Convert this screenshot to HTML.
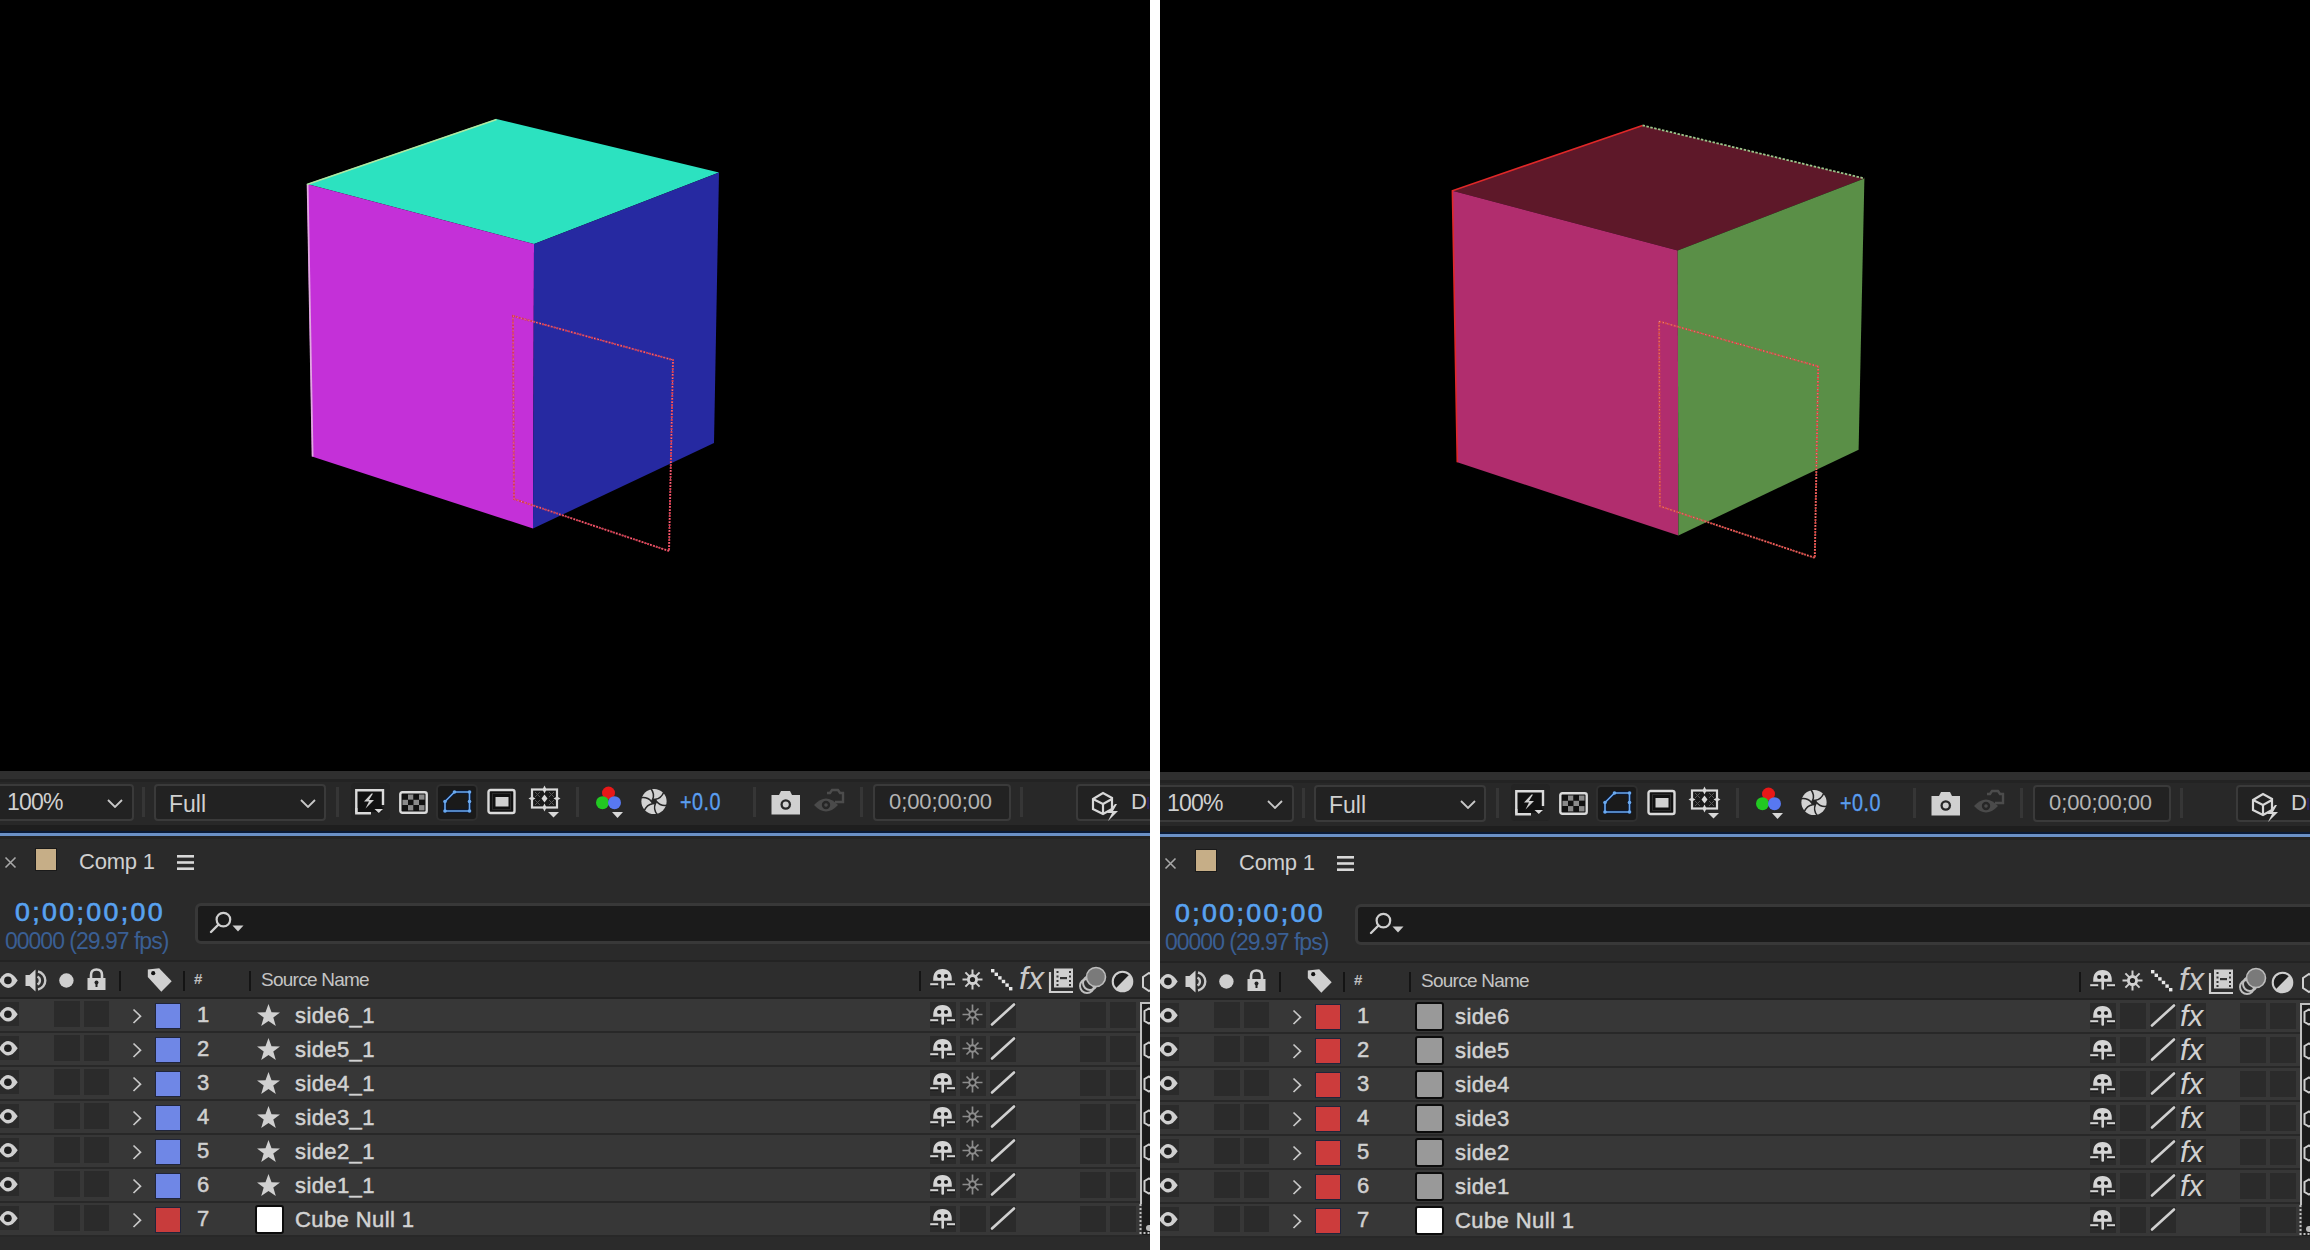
<!DOCTYPE html>
<html><head><meta charset="utf-8"><style>
html,body{margin:0;padding:0;}
body{width:2310px;height:1250px;position:relative;overflow:hidden;background:#fff;font-family:"Liberation Sans", sans-serif;}
.panel{position:absolute;top:0;width:1150px;height:1250px;overflow:hidden;}
</style></head><body>
<div class="panel" style="left:0;top:0">
<div style="position:absolute;left:0px;top:-2px;width:1150px;height:773px;background:#000;"></div>
<svg style="position:absolute;left:0px;top:0px;" width="1150" height="771" viewBox="0 0 1150 771"><polygon points="496.5,119 719,172.5 534,244 307,184" fill="#2ce2c0"/><polygon points="307,184 534,244 533,528.5 312,456.5" fill="#c430d8"/><polygon points="534,244 719,172.5 714,443 533,528.5" fill="#2629a1"/><polygon points="513,316 673,360 669,551 514,499" fill="none" stroke="#d83c50" stroke-width="2" stroke-dasharray="2 1"/><polygon points="513,316 673,360 669,551 514,499" fill="none" stroke="#f0b8c8" stroke-width="1" stroke-dasharray="1 3" opacity="0.6"/><line x1="307.6" y1="184" x2="312.6" y2="456.5" stroke="#e0a8e0" stroke-width="1.8"/><line x1="307" y1="184.5" x2="496.5" y2="119.5" stroke="#b0e8a0" stroke-width="1.6"/></svg>
<div style="position:absolute;left:0px;top:771px;width:1150px;height:8px;background:#2f2f2f;"></div>
<div style="position:absolute;left:0px;top:779px;width:1150px;height:3px;background:#232323;"></div>
<div style="position:absolute;left:0px;top:782px;width:1150px;height:43px;background:#282828;"></div>
<div style="position:absolute;left:0px;top:825px;width:1150px;height:6px;background:#1e1e1e;"></div>
<div style="position:absolute;left:0px;top:831px;width:1150px;height:2px;background:#0a1a35;"></div>
<div style="position:absolute;left:0px;top:833px;width:1150px;height:3px;background:#6a90c6;"></div>
<div style="position:absolute;left:0px;top:836px;width:1150px;height:3px;background:#232323;"></div>
<div style="position:absolute;left:0px;top:839px;width:1150px;height:411px;background:#2a2a2a;"></div>
<div style="position:absolute;left:-10px;top:784px;width:144px;height:37px;background:#222;border:2px solid #3a3a3a;border-radius:4px;box-sizing:border-box;"></div>
<div style="position:absolute;left:7px;top:791px;font-size:23px;line-height:23px;color:#d0d0d0;font-weight:normal;white-space:nowrap;letter-spacing:-0.8px;">100%</div>
<svg style="position:absolute;left:107px;top:799px;" width="16" height="9" viewBox="0 0 16 9"><polyline points="1,1 8,8 15,1" fill="none" stroke="#c8c8c8" stroke-width="1.8"/></svg>
<div style="position:absolute;left:142px;top:787px;width:3px;height:30px;background:#363636;"></div>
<div style="position:absolute;left:154px;top:784px;width:172px;height:37px;background:#222;border:2px solid #3a3a3a;border-radius:4px;box-sizing:border-box;"></div>
<div style="position:absolute;left:169px;top:793px;font-size:23px;line-height:23px;color:#d0d0d0;font-weight:normal;white-space:nowrap;">Full</div>
<svg style="position:absolute;left:300px;top:799px;" width="16" height="9" viewBox="0 0 16 9"><polyline points="1,1 8,8 15,1" fill="none" stroke="#c8c8c8" stroke-width="1.8"/></svg>
<div style="position:absolute;left:336px;top:787px;width:3px;height:30px;background:#363636;"></div>
<div style="position:absolute;left:351px;top:783px;width:39px;height:37px;background:#242424;border-radius:4px;"></div>
<svg style="position:absolute;left:354px;top:788px;" width="32" height="28" viewBox="0 0 32 28"><rect x="3" y="3" width="25" height="21" fill="#111"/><path d="M2.3,24.5 V2.3 H29 V17" fill="none" stroke="#dadada" stroke-width="2.4"/><path d="M2.3,20 V25.2 H17" fill="none" stroke="#dadada" stroke-width="2.4"/><path d="M17.5,5.5 L10,13.5 H15 L11.5,20.5 L20,12 H15 L19,5.5 Z" fill="#d0d0d0"/><path d="M19,19.5 H30 L24.5,25.5 Z" fill="#111"/><path d="M20.5,21 H29 L24.75,25 Z" fill="#dadada"/></svg>
<svg style="position:absolute;left:399px;top:791px;" width="29" height="23" viewBox="0 0 29 23"><rect x="2" y="2" width="25" height="19" fill="#111"/><rect x="3.5" y="3.5" width="5.5" height="5.3" fill="#111"/><rect x="3.5" y="8.8" width="5.5" height="5.3" fill="#8a8a8a"/><rect x="3.5" y="14.1" width="5.5" height="5.3" fill="#111"/><rect x="9.0" y="3.5" width="5.5" height="5.3" fill="#8a8a8a"/><rect x="9.0" y="8.8" width="5.5" height="5.3" fill="#111"/><rect x="9.0" y="14.1" width="5.5" height="5.3" fill="#8a8a8a"/><rect x="14.5" y="3.5" width="5.5" height="5.3" fill="#111"/><rect x="14.5" y="8.8" width="5.5" height="5.3" fill="#8a8a8a"/><rect x="14.5" y="14.1" width="5.5" height="5.3" fill="#111"/><rect x="20.0" y="3.5" width="5.5" height="5.3" fill="#8a8a8a"/><rect x="20.0" y="8.8" width="5.5" height="5.3" fill="#111"/><rect x="20.0" y="14.1" width="5.5" height="5.3" fill="#8a8a8a"/><rect x="1.3" y="1.3" width="26.4" height="20.4" rx="2" fill="none" stroke="#dadada" stroke-width="2.4"/></svg>
<div style="position:absolute;left:436px;top:784px;width:42px;height:37px;background:#1a1a1a;border-radius:5px;border:2px solid #2f2f2f;box-sizing:border-box;"></div>
<svg style="position:absolute;left:441px;top:787px;" width="33" height="30" viewBox="0 0 33 30"><path d="M4,14.5 L13.5,5 H28.5 V24 H4 Z" fill="none" stroke="#0a1a3a" stroke-width="3.5"/><path d="M4,14.5 L13.5,5 H28.5 V24 H4 Z" fill="none" stroke="#6aa8f0" stroke-width="1.6"/><g fill="#6aaaf0"><circle cx="4" cy="14.5" r="1.8"/><circle cx="13.5" cy="5" r="1.8"/><circle cx="28.5" cy="5" r="1.8"/><circle cx="28.5" cy="14.5" r="1.8"/><circle cx="28.5" cy="24" r="1.8"/><circle cx="4" cy="24" r="1.8"/></g></svg>
<svg style="position:absolute;left:486px;top:788px;" width="31" height="27" viewBox="0 0 31 27"><rect x="2.5" y="2" width="26" height="23" rx="2" fill="#111" stroke="#dadada" stroke-width="2.4"/><rect x="6.5" y="5.5" width="18" height="16" fill="none" stroke="#2a2a2a" stroke-width="1"/><rect x="9.5" y="9" width="13" height="9.5" fill="#d0d0d0"/></svg>
<svg style="position:absolute;left:527px;top:785px;" width="34" height="34" viewBox="0 0 34 34"><rect x="5" y="4.5" width="25" height="18" fill="#1a1a1a" stroke="#dadada" stroke-width="2.2"/><g fill="#d8d8d8"><path d="M17.5,0.5 L19.5,4.5 L17.5,8.5 L15.5,4.5 Z"/><path d="M17.5,18.5 L19.5,22.5 L17.5,26.5 L15.5,22.5 Z"/><path d="M1.5,13.5 L5,11.5 L8.5,13.5 L5,15.5 Z"/><path d="M26.5,13.5 L30,11.5 L33.5,13.5 L30,15.5 Z"/><path d="M17.5,9.5 L20.5,13.5 L17.5,17.5 L14.5,13.5 Z"/></g><g stroke="#555" stroke-width="1"><path d="M8,7 L13,12 M13,7 L8,12 M22,7 L27,12 M27,7 L22,12 M8,15 L13,20 M13,15 L8,20 M22,15 L27,20 M27,15 L22,20"/></g><path d="M21,27 H32 L26.5,32.5 Z" fill="#d8d8d8"/></svg>
<div style="position:absolute;left:576px;top:787px;width:3px;height:30px;background:#363636;"></div>
<svg style="position:absolute;left:594px;top:785px;" width="32" height="34" viewBox="0 0 32 34"><circle cx="14.5" cy="8" r="6.5" fill="#e81818"/><circle cx="8.5" cy="17.7" r="6.5" fill="#22c822"/><circle cx="20.5" cy="17.7" r="6.5" fill="#5878f0"/><path d="M18,27 H29 L23.5,33 Z" fill="#d8d8d8"/></svg>
<svg style="position:absolute;left:640px;top:787px;" width="28" height="29" viewBox="0 0 28 29"><circle cx="14" cy="14.5" r="12.6" fill="#d2d2d2"/><path d="M14,14.5 m2.6,0.0 q3.7296598096239864,4.699961457764901 10.333099841321168,3.7718758820099647" fill="none" stroke="#262626" stroke-width="1.5"/><path d="M14,14.5 m1.2999944861086188,2.2516692332772124 q-2.2054697786407074,5.579955470745489 1.8999830549481462,10.83466955614752" fill="none" stroke="#262626" stroke-width="1.5"/><path d="M14,14.5 m-1.3000110277593755,2.25165968292369 q-5.935120233864074,0.8799703458510681 -8.433124845065478,7.062747719375183" fill="none" stroke="#262626" stroke-width="1.5"/><path d="M14,14.5 m-2.5999999999298393,-1.9100666536118694e-05 q-3.729625281678519,-4.6999888572489645 -10.333072131294855,-3.771951793098318" fill="none" stroke="#262626" stroke-width="1.5"/><path d="M14,14.5 m-1.2999779443877018,-2.2516787835092122 q2.205510771223016,-5.5799392683092215 -1.8999034589698673,-10.834683513910054" fill="none" stroke="#262626" stroke-width="1.5"/><path d="M14,14.5 m1.3000275693399714,-2.251650132448646 q5.935126698327047,-0.8799267439994558 8.433176730679842,-7.062685765990164" fill="none" stroke="#262626" stroke-width="1.5"/><circle cx="14" cy="14.5" r="3" fill="#262626"/></svg>
<div style="position:absolute;left:680px;top:791px;font-size:23px;line-height:23px;color:#5a9ef0;font-weight:normal;white-space:nowrap;letter-spacing:0.6px;-webkit-text-stroke:0.3px #5a9ef0;transform:scaleX(0.86);transform-origin:0 0;">+0.0</div>
<div style="position:absolute;left:753px;top:787px;width:3px;height:30px;background:#363636;"></div>
<svg style="position:absolute;left:770px;top:789px;" width="32" height="28" viewBox="0 0 32 28"><path d="M1.5,6 H9 L11,2 H20 L22,6 H30 V25.5 H1.5 Z" fill="#d0d0d0"/><circle cx="15.75" cy="15.5" r="5.3" fill="#282828"/><circle cx="15.75" cy="15.5" r="3" fill="#d0d0d0"/></svg>
<svg style="position:absolute;left:812px;top:786px;" width="34" height="29" viewBox="0 0 34 29"><g fill="none" stroke="#4c4c4c" stroke-width="2.4"><path d="M15,7 H18 L20,4 H26 L28,7 H31 V16 H23"/></g><path d="M2,19 Q14,6 26,19 Q14,32 2,19 Z" fill="#4a4a4a"/><circle cx="14" cy="19" r="4.2" fill="#262626"/><circle cx="14" cy="19" r="1.8" fill="#4a4a4a"/></svg>
<div style="position:absolute;left:860px;top:787px;width:3px;height:30px;background:#363636;"></div>
<div style="position:absolute;left:873px;top:784px;width:138px;height:37px;background:#222;border:2px solid #3a3a3a;border-radius:4px;box-sizing:border-box;"></div>
<div style="position:absolute;left:889px;top:791px;font-size:22px;line-height:22px;color:#b4b4b4;font-weight:normal;white-space:nowrap;letter-spacing:-0.1px;">0;00;00;00</div>
<div style="position:absolute;left:1020px;top:787px;width:3px;height:30px;background:#363636;"></div>
<div style="position:absolute;left:1076px;top:784px;width:120px;height:37px;background:#222;border:2px solid #3a3a3a;border-radius:4px;box-sizing:border-box;"></div>
<svg style="position:absolute;left:1089px;top:790px;" width="33" height="32" viewBox="0 0 33 32"><g fill="none" stroke="#d8d8d8" stroke-width="2.2"><path d="M4,9 L14,3 L23,8 V19 L14,24 L4,19 Z"/><path d="M4,9 L14,14 L23,9"/><path d="M14,14 V24"/></g><path d="M26,14 L18,23 H23 L19,31 L29,21 H24 L28,14 Z" fill="#d8d8d8"/></svg>
<div style="position:absolute;left:1131px;top:791px;font-size:22px;line-height:22px;color:#d0d0d0;font-weight:normal;white-space:nowrap;">D</div>
<div style="position:absolute;left:1147px;top:797px;width:2px;height:12px;background:#2a2462;"></div>
<svg style="position:absolute;left:4px;top:856px;" width="13" height="13" viewBox="0 0 13 13"><path d="M1.5,1.5 L11.5,11.5 M11.5,1.5 L1.5,11.5" stroke="#a8a8a8" stroke-width="1.6"/></svg>
<div style="position:absolute;left:35.5px;top:849px;width:20px;height:21px;background:#c6ae87;box-shadow:0 0 0 1px #1a1a1a;"></div>
<div style="position:absolute;left:79px;top:851px;font-size:22px;line-height:22px;color:#cfcfcf;font-weight:normal;white-space:nowrap;letter-spacing:-0.2px;">Comp 1</div>
<svg style="position:absolute;left:176px;top:854px;" width="19" height="17" viewBox="0 0 19 17"><g fill="#d8d8d8"><rect x="1" y="1" width="17" height="2.6"/><rect x="1" y="7.2" width="17" height="2.6"/><rect x="1" y="13.4" width="17" height="2.6"/></g></svg>
<div style="position:absolute;left:15px;top:900px;font-size:25px;line-height:25px;color:#58a2f0;font-weight:normal;white-space:nowrap;-webkit-text-stroke:0.6px #58a2f0;letter-spacing:2.2px;transform:scaleX(1.07);transform-origin:0 0;">0;00;00;00</div>
<div style="position:absolute;left:5px;top:930px;font-size:23px;line-height:23px;color:#3a5f94;font-weight:normal;white-space:nowrap;letter-spacing:-1.0px;">00000 (29.97 fps)</div>
<div style="position:absolute;left:195px;top:903px;width:980px;height:41px;background:#1b1b1b;border:3px solid #383838;border-radius:6px;box-sizing:border-box;"></div>
<svg style="position:absolute;left:206px;top:909px;" width="42" height="30" viewBox="0 0 42 30"><circle cx="17.4" cy="10.6" r="6.8" fill="none" stroke="#cfcfcf" stroke-width="2.2"/><path d="M12.5,15.5 L5,23" stroke="#cfcfcf" stroke-width="2.4" stroke-linecap="round"/><path d="M26.5,16.5 H37.5 L32,22.5 Z" fill="#cfcfcf"/></svg>
<div style="position:absolute;left:0px;top:960px;width:1150px;height:2px;background:#232323;"></div>
<div style="position:absolute;left:0px;top:962px;width:1150px;height:35px;background:#2d2d2d;"></div>
<div style="position:absolute;left:0px;top:997px;width:1150px;height:2px;background:#222;"></div>
<svg style="position:absolute;left:-1px;top:971px;" width="20" height="20" viewBox="0 0 20 20"><path d="M0,9.5 Q9,-5.5 18.7,9.5 Q9,24.5 0,9.5 Z" fill="#d0d0d0"/><circle cx="8.9" cy="9.4" r="3.8" fill="#1e1e1e"/></svg>
<svg style="position:absolute;left:24px;top:968px;" width="27" height="25" viewBox="0 0 27 25"><path d="M1.5,7 H5.5 L11.5,1.5 V23.5 L5.5,18 H1.5 Z" fill="#d0d0d0"/><g fill="none" stroke="#c8c8c8" stroke-width="2.4"><path d="M13.5,8.5 A4.5,4.5 0 0 1 13.5,16.5"/><path d="M14,3.5 A9.2,9.2 0 0 1 14,21.5"/></g></svg>
<svg style="position:absolute;left:58px;top:972px;" width="17" height="17" viewBox="0 0 17 17"><circle cx="8.4" cy="8.5" r="7.2" fill="#cfcfcf"/></svg>
<svg style="position:absolute;left:86px;top:968px;" width="21" height="23" viewBox="0 0 21 23"><path d="M5,10 V7 Q5,1.5 10.5,1.5 Q16,1.5 16,7 V10" fill="none" stroke="#d0d0d0" stroke-width="2.6"/><rect x="1.5" y="10" width="18" height="12" fill="#d0d0d0"/><circle cx="10.5" cy="14.5" r="2" fill="#222"/><rect x="9.5" y="15" width="2" height="4" fill="#222"/></svg>
<div style="position:absolute;left:119px;top:971px;width:2px;height:20px;background:#141414;"></div>
<svg style="position:absolute;left:146px;top:967px;" width="27" height="26" viewBox="0 0 27 26"><path d="M1.8,2.4 L13.2,1.3 L25.7,14.3 L15.3,24.7 L1.8,10.1 Z" fill="#d0d0d0"/><circle cx="7.2" cy="6.2" r="2.1" fill="#111"/></svg>
<div style="position:absolute;left:183px;top:971px;width:2px;height:20px;background:#141414;"></div>
<div style="position:absolute;left:194px;top:971px;font-size:15px;line-height:15px;color:#bfbfbf;font-weight:bold;white-space:nowrap;">#</div>
<div style="position:absolute;left:249px;top:971px;width:2px;height:20px;background:#141414;"></div>
<div style="position:absolute;left:261px;top:970px;font-size:19px;line-height:19px;color:#c4c4c4;font-weight:normal;white-space:nowrap;letter-spacing:-0.75px;">Source Name</div>
<div style="position:absolute;left:919px;top:971px;width:2px;height:20px;background:#141414;"></div>
<svg style="position:absolute;left:928px;top:967px;" width="30" height="25" viewBox="0 0 30 25"><path d="M5.2,13.8 Q4.8,2 14.5,2 Q24.2,2 23.8,13.8 Z" fill="#d4d4d4"/><circle cx="11.2" cy="9" r="2.1" fill="#1a1a1a"/><circle cx="18" cy="9" r="2.1" fill="#1a1a1a"/><rect x="13.4" y="12" width="2.6" height="9.8" rx="1" fill="#d4d4d4"/><rect x="2.2" y="16.2" width="8" height="2.3" fill="#d4d4d4"/><rect x="19" y="16.2" width="8" height="2.3" fill="#d4d4d4"/><rect x="2.2" y="18.5" width="8" height="1" fill="#111"/><rect x="19" y="18.5" width="8" height="1" fill="#111"/></svg>
<svg style="position:absolute;left:961px;top:968px;" width="23" height="23" viewBox="0 0 23 23"><g stroke="#d0d0d0" stroke-width="2"><path d="M11.5,1.5 V21.5 M1.5,11.5 H21.5 M4.4,4.4 L18.6,18.6 M18.6,4.4 L4.4,18.6"/></g><circle cx="11.5" cy="11.5" r="5.5" fill="#d0d0d0"/><circle cx="11.5" cy="11.5" r="2.6" fill="#222"/></svg>
<svg style="position:absolute;left:990px;top:968px;" width="24" height="24" viewBox="0 0 24 24"><g fill="#e8e8e8"><rect x="1.0" y="1.0" width="3.4" height="3.4"/><rect x="4.6" y="4.6" width="3.4" height="3.4"/><rect x="8.2" y="8.2" width="3.4" height="3.4"/><rect x="11.8" y="11.8" width="3.4" height="3.4"/><rect x="15.4" y="15.4" width="3.4" height="3.4"/><rect x="19.0" y="19.0" width="3.4" height="3.4"/></g></svg>
<div style="position:absolute;left:1019px;top:962px;font-size:32px;line-height:32px;color:#c8c8c8;font-weight:normal;white-space:nowrap;font-style:italic;font-family:"Liberation Serif",serif;letter-spacing:-1px;">fx</div>
<svg style="position:absolute;left:1048px;top:967px;" width="27" height="27" viewBox="0 0 27 27"><path d="M2,5 V25 H25" fill="none" stroke="#cfcfcf" stroke-width="2.2"/><rect x="6" y="1.5" width="19" height="19" fill="#cfcfcf"/><g fill="#333"><rect x="8.5" y="4" width="2" height="2"/><rect x="8.5" y="8.5" width="2" height="2"/><rect x="8.5" y="13" width="2" height="2"/><rect x="8.5" y="17" width="2" height="2"/><rect x="21" y="4" width="2" height="2"/><rect x="21" y="8.5" width="2" height="2"/><rect x="21" y="13" width="2" height="2"/><rect x="21" y="17" width="2" height="2"/><rect x="12" y="10" width="7" height="2.2"/></g></svg>
<svg style="position:absolute;left:1078px;top:966px;" width="30" height="29" viewBox="0 0 30 29"><g fill="none" stroke="#c0c0c0" stroke-width="2"><circle cx="9" cy="20" r="7"/><circle cx="12" cy="17" r="7"/></g><circle cx="18" cy="11" r="9.5" fill="#7a7a7a" stroke="#bdbdbd" stroke-width="1.6"/></svg>
<svg style="position:absolute;left:1111px;top:970px;" width="23" height="23" viewBox="0 0 23 23"><circle cx="11.5" cy="11.5" r="9.8" fill="#cfcfcf"/><path d="M18.4,4.6 A9.8,9.8 0 0 0 4.6,18.4 Z" fill="#1e1e1e"/><circle cx="11.5" cy="11.5" r="9.8" fill="none" stroke="#cfcfcf" stroke-width="2"/></svg>
<svg style="position:absolute;left:1141px;top:970px;" width="12" height="24" viewBox="0 0 12 24"><path d="M2,7 L8,3 L14,7 V17 L8,21 L2,17 Z" fill="none" stroke="#cfcfcf" stroke-width="2"/></svg>
<div style="position:absolute;left:0px;top:999px;width:1150px;height:32px;background:#373737;"></div>
<div style="position:absolute;left:0px;top:1031px;width:1150px;height:2px;background:#282828;"></div>
<div style="position:absolute;left:0px;top:1002px;width:19px;height:24px;background:#2b2b2b;"></div>
<svg style="position:absolute;left:-1px;top:1005px;" width="20" height="19" viewBox="0 0 20 19"><path d="M0,9.3 Q9,-5.3 18.7,9.3 Q9,23.9 0,9.3 Z" fill="#d0d0d0"/><circle cx="8.9" cy="9.2" r="3.8" fill="#1e1e1e"/></svg>
<div style="position:absolute;left:53.5px;top:1001px;width:26.5px;height:26px;background:#2b2b2b;"></div>
<div style="position:absolute;left:83.7px;top:1001px;width:25.5px;height:26px;background:#2b2b2b;"></div>
<svg style="position:absolute;left:131px;top:1008px;" width="12" height="17" viewBox="0 0 12 17"><polyline points="2.5,1.5 9.5,8.2 2.5,15" fill="none" stroke="#c8c8c8" stroke-width="1.7"/></svg>
<div style="position:absolute;left:154.5px;top:1002.8px;width:26px;height:26px;background:#6f87e6;border:1px solid #20253a;box-sizing:border-box;"></div>
<div style="position:absolute;left:197px;top:1004px;font-size:22px;line-height:22px;color:#d0d0d0;font-weight:normal;white-space:nowrap;-webkit-text-stroke:0.5px #d0d0d0;">1</div>
<svg style="position:absolute;left:256px;top:1003px;" width="25" height="24" viewBox="0 0 25 24"><path d="M12.5,1 L15.5,9.2 L24,9.4 L17.3,14.6 L19.8,23 L12.5,18 L5.2,23 L7.7,14.6 L1,9.4 L9.5,9.2 Z" fill="#d0d0d0"/></svg>
<div style="position:absolute;left:295px;top:1005px;font-size:22px;line-height:22px;color:#d2d2d2;font-weight:normal;white-space:nowrap;letter-spacing:0.4px;-webkit-text-stroke:0.5px #d2d2d2;">side6_1</div>
<div style="position:absolute;left:929.5px;top:1002px;width:26.5px;height:25.5px;background:#2b2b2b;"></div>
<svg style="position:absolute;left:928px;top:1003px;" width="30" height="25" viewBox="0 0 30 25"><path d="M5.2,13.8 Q4.8,2 14.5,2 Q24.2,2 23.8,13.8 Z" fill="#d4d4d4"/><circle cx="11.2" cy="9" r="2.1" fill="#1a1a1a"/><circle cx="18" cy="9" r="2.1" fill="#1a1a1a"/><rect x="13.4" y="12" width="2.6" height="9.8" rx="1" fill="#d4d4d4"/><rect x="2.2" y="16.2" width="8" height="2.3" fill="#d4d4d4"/><rect x="19" y="16.2" width="8" height="2.3" fill="#d4d4d4"/><rect x="2.2" y="18.5" width="8" height="1" fill="#111"/><rect x="19" y="18.5" width="8" height="1" fill="#111"/></svg>
<div style="position:absolute;left:960px;top:1002px;width:26px;height:25.5px;background:#2b2b2b;"></div>
<svg style="position:absolute;left:961px;top:1003px;" width="23" height="23" viewBox="0 0 23 23"><g stroke="#8c8c8c" stroke-width="1.7"><path d="M11.5,1.5 V21.5 M1.5,11.5 H21.5 M5.5,5.5 L17.5,17.5 M17.5,5.5 L5.5,17.5"/></g><circle cx="11.5" cy="11.5" r="4.2" fill="#8c8c8c"/><circle cx="11.5" cy="11.5" r="2.3" fill="#222"/></svg>
<div style="position:absolute;left:990px;top:1002px;width:26px;height:25.5px;background:#2b2b2b;"></div>
<svg style="position:absolute;left:989px;top:1002px;" width="28" height="25" viewBox="0 0 28 25"><path d="M3,22.5 L25,2.5" stroke="#d0d0d0" stroke-width="2.6" stroke-linecap="round"/></svg>
<div style="position:absolute;left:1079.5px;top:1002px;width:26px;height:25.5px;background:#2b2b2b;"></div>
<div style="position:absolute;left:1110px;top:1002px;width:26px;height:25.5px;background:#2b2b2b;"></div>
<div style="position:absolute;left:0px;top:1033px;width:1150px;height:32px;background:#373737;"></div>
<div style="position:absolute;left:0px;top:1065px;width:1150px;height:2px;background:#282828;"></div>
<div style="position:absolute;left:0px;top:1036px;width:19px;height:24px;background:#2b2b2b;"></div>
<svg style="position:absolute;left:-1px;top:1039px;" width="20" height="19" viewBox="0 0 20 19"><path d="M0,9.3 Q9,-5.3 18.7,9.3 Q9,23.9 0,9.3 Z" fill="#d0d0d0"/><circle cx="8.9" cy="9.2" r="3.8" fill="#1e1e1e"/></svg>
<div style="position:absolute;left:53.5px;top:1035px;width:26.5px;height:26px;background:#2b2b2b;"></div>
<div style="position:absolute;left:83.7px;top:1035px;width:25.5px;height:26px;background:#2b2b2b;"></div>
<svg style="position:absolute;left:131px;top:1042px;" width="12" height="17" viewBox="0 0 12 17"><polyline points="2.5,1.5 9.5,8.2 2.5,15" fill="none" stroke="#c8c8c8" stroke-width="1.7"/></svg>
<div style="position:absolute;left:154.5px;top:1036.8px;width:26px;height:26px;background:#6f87e6;border:1px solid #20253a;box-sizing:border-box;"></div>
<div style="position:absolute;left:197px;top:1038px;font-size:22px;line-height:22px;color:#d0d0d0;font-weight:normal;white-space:nowrap;-webkit-text-stroke:0.5px #d0d0d0;">2</div>
<svg style="position:absolute;left:256px;top:1037px;" width="25" height="24" viewBox="0 0 25 24"><path d="M12.5,1 L15.5,9.2 L24,9.4 L17.3,14.6 L19.8,23 L12.5,18 L5.2,23 L7.7,14.6 L1,9.4 L9.5,9.2 Z" fill="#d0d0d0"/></svg>
<div style="position:absolute;left:295px;top:1039px;font-size:22px;line-height:22px;color:#d2d2d2;font-weight:normal;white-space:nowrap;letter-spacing:0.4px;-webkit-text-stroke:0.5px #d2d2d2;">side5_1</div>
<div style="position:absolute;left:929.5px;top:1036px;width:26.5px;height:25.5px;background:#2b2b2b;"></div>
<svg style="position:absolute;left:928px;top:1037px;" width="30" height="25" viewBox="0 0 30 25"><path d="M5.2,13.8 Q4.8,2 14.5,2 Q24.2,2 23.8,13.8 Z" fill="#d4d4d4"/><circle cx="11.2" cy="9" r="2.1" fill="#1a1a1a"/><circle cx="18" cy="9" r="2.1" fill="#1a1a1a"/><rect x="13.4" y="12" width="2.6" height="9.8" rx="1" fill="#d4d4d4"/><rect x="2.2" y="16.2" width="8" height="2.3" fill="#d4d4d4"/><rect x="19" y="16.2" width="8" height="2.3" fill="#d4d4d4"/><rect x="2.2" y="18.5" width="8" height="1" fill="#111"/><rect x="19" y="18.5" width="8" height="1" fill="#111"/></svg>
<div style="position:absolute;left:960px;top:1036px;width:26px;height:25.5px;background:#2b2b2b;"></div>
<svg style="position:absolute;left:961px;top:1037px;" width="23" height="23" viewBox="0 0 23 23"><g stroke="#8c8c8c" stroke-width="1.7"><path d="M11.5,1.5 V21.5 M1.5,11.5 H21.5 M5.5,5.5 L17.5,17.5 M17.5,5.5 L5.5,17.5"/></g><circle cx="11.5" cy="11.5" r="4.2" fill="#8c8c8c"/><circle cx="11.5" cy="11.5" r="2.3" fill="#222"/></svg>
<div style="position:absolute;left:990px;top:1036px;width:26px;height:25.5px;background:#2b2b2b;"></div>
<svg style="position:absolute;left:989px;top:1036px;" width="28" height="25" viewBox="0 0 28 25"><path d="M3,22.5 L25,2.5" stroke="#d0d0d0" stroke-width="2.6" stroke-linecap="round"/></svg>
<div style="position:absolute;left:1079.5px;top:1036px;width:26px;height:25.5px;background:#2b2b2b;"></div>
<div style="position:absolute;left:1110px;top:1036px;width:26px;height:25.5px;background:#2b2b2b;"></div>
<div style="position:absolute;left:0px;top:1067px;width:1150px;height:32px;background:#373737;"></div>
<div style="position:absolute;left:0px;top:1099px;width:1150px;height:2px;background:#282828;"></div>
<div style="position:absolute;left:0px;top:1070px;width:19px;height:24px;background:#2b2b2b;"></div>
<svg style="position:absolute;left:-1px;top:1073px;" width="20" height="19" viewBox="0 0 20 19"><path d="M0,9.3 Q9,-5.3 18.7,9.3 Q9,23.9 0,9.3 Z" fill="#d0d0d0"/><circle cx="8.9" cy="9.2" r="3.8" fill="#1e1e1e"/></svg>
<div style="position:absolute;left:53.5px;top:1069px;width:26.5px;height:26px;background:#2b2b2b;"></div>
<div style="position:absolute;left:83.7px;top:1069px;width:25.5px;height:26px;background:#2b2b2b;"></div>
<svg style="position:absolute;left:131px;top:1076px;" width="12" height="17" viewBox="0 0 12 17"><polyline points="2.5,1.5 9.5,8.2 2.5,15" fill="none" stroke="#c8c8c8" stroke-width="1.7"/></svg>
<div style="position:absolute;left:154.5px;top:1070.8px;width:26px;height:26px;background:#6f87e6;border:1px solid #20253a;box-sizing:border-box;"></div>
<div style="position:absolute;left:197px;top:1072px;font-size:22px;line-height:22px;color:#d0d0d0;font-weight:normal;white-space:nowrap;-webkit-text-stroke:0.5px #d0d0d0;">3</div>
<svg style="position:absolute;left:256px;top:1071px;" width="25" height="24" viewBox="0 0 25 24"><path d="M12.5,1 L15.5,9.2 L24,9.4 L17.3,14.6 L19.8,23 L12.5,18 L5.2,23 L7.7,14.6 L1,9.4 L9.5,9.2 Z" fill="#d0d0d0"/></svg>
<div style="position:absolute;left:295px;top:1073px;font-size:22px;line-height:22px;color:#d2d2d2;font-weight:normal;white-space:nowrap;letter-spacing:0.4px;-webkit-text-stroke:0.5px #d2d2d2;">side4_1</div>
<div style="position:absolute;left:929.5px;top:1070px;width:26.5px;height:25.5px;background:#2b2b2b;"></div>
<svg style="position:absolute;left:928px;top:1071px;" width="30" height="25" viewBox="0 0 30 25"><path d="M5.2,13.8 Q4.8,2 14.5,2 Q24.2,2 23.8,13.8 Z" fill="#d4d4d4"/><circle cx="11.2" cy="9" r="2.1" fill="#1a1a1a"/><circle cx="18" cy="9" r="2.1" fill="#1a1a1a"/><rect x="13.4" y="12" width="2.6" height="9.8" rx="1" fill="#d4d4d4"/><rect x="2.2" y="16.2" width="8" height="2.3" fill="#d4d4d4"/><rect x="19" y="16.2" width="8" height="2.3" fill="#d4d4d4"/><rect x="2.2" y="18.5" width="8" height="1" fill="#111"/><rect x="19" y="18.5" width="8" height="1" fill="#111"/></svg>
<div style="position:absolute;left:960px;top:1070px;width:26px;height:25.5px;background:#2b2b2b;"></div>
<svg style="position:absolute;left:961px;top:1071px;" width="23" height="23" viewBox="0 0 23 23"><g stroke="#8c8c8c" stroke-width="1.7"><path d="M11.5,1.5 V21.5 M1.5,11.5 H21.5 M5.5,5.5 L17.5,17.5 M17.5,5.5 L5.5,17.5"/></g><circle cx="11.5" cy="11.5" r="4.2" fill="#8c8c8c"/><circle cx="11.5" cy="11.5" r="2.3" fill="#222"/></svg>
<div style="position:absolute;left:990px;top:1070px;width:26px;height:25.5px;background:#2b2b2b;"></div>
<svg style="position:absolute;left:989px;top:1070px;" width="28" height="25" viewBox="0 0 28 25"><path d="M3,22.5 L25,2.5" stroke="#d0d0d0" stroke-width="2.6" stroke-linecap="round"/></svg>
<div style="position:absolute;left:1079.5px;top:1070px;width:26px;height:25.5px;background:#2b2b2b;"></div>
<div style="position:absolute;left:1110px;top:1070px;width:26px;height:25.5px;background:#2b2b2b;"></div>
<div style="position:absolute;left:0px;top:1101px;width:1150px;height:32px;background:#373737;"></div>
<div style="position:absolute;left:0px;top:1133px;width:1150px;height:2px;background:#282828;"></div>
<div style="position:absolute;left:0px;top:1104px;width:19px;height:24px;background:#2b2b2b;"></div>
<svg style="position:absolute;left:-1px;top:1107px;" width="20" height="19" viewBox="0 0 20 19"><path d="M0,9.3 Q9,-5.3 18.7,9.3 Q9,23.9 0,9.3 Z" fill="#d0d0d0"/><circle cx="8.9" cy="9.2" r="3.8" fill="#1e1e1e"/></svg>
<div style="position:absolute;left:53.5px;top:1103px;width:26.5px;height:26px;background:#2b2b2b;"></div>
<div style="position:absolute;left:83.7px;top:1103px;width:25.5px;height:26px;background:#2b2b2b;"></div>
<svg style="position:absolute;left:131px;top:1110px;" width="12" height="17" viewBox="0 0 12 17"><polyline points="2.5,1.5 9.5,8.2 2.5,15" fill="none" stroke="#c8c8c8" stroke-width="1.7"/></svg>
<div style="position:absolute;left:154.5px;top:1104.8px;width:26px;height:26px;background:#6f87e6;border:1px solid #20253a;box-sizing:border-box;"></div>
<div style="position:absolute;left:197px;top:1106px;font-size:22px;line-height:22px;color:#d0d0d0;font-weight:normal;white-space:nowrap;-webkit-text-stroke:0.5px #d0d0d0;">4</div>
<svg style="position:absolute;left:256px;top:1105px;" width="25" height="24" viewBox="0 0 25 24"><path d="M12.5,1 L15.5,9.2 L24,9.4 L17.3,14.6 L19.8,23 L12.5,18 L5.2,23 L7.7,14.6 L1,9.4 L9.5,9.2 Z" fill="#d0d0d0"/></svg>
<div style="position:absolute;left:295px;top:1107px;font-size:22px;line-height:22px;color:#d2d2d2;font-weight:normal;white-space:nowrap;letter-spacing:0.4px;-webkit-text-stroke:0.5px #d2d2d2;">side3_1</div>
<div style="position:absolute;left:929.5px;top:1104px;width:26.5px;height:25.5px;background:#2b2b2b;"></div>
<svg style="position:absolute;left:928px;top:1105px;" width="30" height="25" viewBox="0 0 30 25"><path d="M5.2,13.8 Q4.8,2 14.5,2 Q24.2,2 23.8,13.8 Z" fill="#d4d4d4"/><circle cx="11.2" cy="9" r="2.1" fill="#1a1a1a"/><circle cx="18" cy="9" r="2.1" fill="#1a1a1a"/><rect x="13.4" y="12" width="2.6" height="9.8" rx="1" fill="#d4d4d4"/><rect x="2.2" y="16.2" width="8" height="2.3" fill="#d4d4d4"/><rect x="19" y="16.2" width="8" height="2.3" fill="#d4d4d4"/><rect x="2.2" y="18.5" width="8" height="1" fill="#111"/><rect x="19" y="18.5" width="8" height="1" fill="#111"/></svg>
<div style="position:absolute;left:960px;top:1104px;width:26px;height:25.5px;background:#2b2b2b;"></div>
<svg style="position:absolute;left:961px;top:1105px;" width="23" height="23" viewBox="0 0 23 23"><g stroke="#8c8c8c" stroke-width="1.7"><path d="M11.5,1.5 V21.5 M1.5,11.5 H21.5 M5.5,5.5 L17.5,17.5 M17.5,5.5 L5.5,17.5"/></g><circle cx="11.5" cy="11.5" r="4.2" fill="#8c8c8c"/><circle cx="11.5" cy="11.5" r="2.3" fill="#222"/></svg>
<div style="position:absolute;left:990px;top:1104px;width:26px;height:25.5px;background:#2b2b2b;"></div>
<svg style="position:absolute;left:989px;top:1104px;" width="28" height="25" viewBox="0 0 28 25"><path d="M3,22.5 L25,2.5" stroke="#d0d0d0" stroke-width="2.6" stroke-linecap="round"/></svg>
<div style="position:absolute;left:1079.5px;top:1104px;width:26px;height:25.5px;background:#2b2b2b;"></div>
<div style="position:absolute;left:1110px;top:1104px;width:26px;height:25.5px;background:#2b2b2b;"></div>
<div style="position:absolute;left:0px;top:1135px;width:1150px;height:32px;background:#373737;"></div>
<div style="position:absolute;left:0px;top:1167px;width:1150px;height:2px;background:#282828;"></div>
<div style="position:absolute;left:0px;top:1138px;width:19px;height:24px;background:#2b2b2b;"></div>
<svg style="position:absolute;left:-1px;top:1141px;" width="20" height="19" viewBox="0 0 20 19"><path d="M0,9.3 Q9,-5.3 18.7,9.3 Q9,23.9 0,9.3 Z" fill="#d0d0d0"/><circle cx="8.9" cy="9.2" r="3.8" fill="#1e1e1e"/></svg>
<div style="position:absolute;left:53.5px;top:1137px;width:26.5px;height:26px;background:#2b2b2b;"></div>
<div style="position:absolute;left:83.7px;top:1137px;width:25.5px;height:26px;background:#2b2b2b;"></div>
<svg style="position:absolute;left:131px;top:1144px;" width="12" height="17" viewBox="0 0 12 17"><polyline points="2.5,1.5 9.5,8.2 2.5,15" fill="none" stroke="#c8c8c8" stroke-width="1.7"/></svg>
<div style="position:absolute;left:154.5px;top:1138.8px;width:26px;height:26px;background:#6f87e6;border:1px solid #20253a;box-sizing:border-box;"></div>
<div style="position:absolute;left:197px;top:1140px;font-size:22px;line-height:22px;color:#d0d0d0;font-weight:normal;white-space:nowrap;-webkit-text-stroke:0.5px #d0d0d0;">5</div>
<svg style="position:absolute;left:256px;top:1139px;" width="25" height="24" viewBox="0 0 25 24"><path d="M12.5,1 L15.5,9.2 L24,9.4 L17.3,14.6 L19.8,23 L12.5,18 L5.2,23 L7.7,14.6 L1,9.4 L9.5,9.2 Z" fill="#d0d0d0"/></svg>
<div style="position:absolute;left:295px;top:1141px;font-size:22px;line-height:22px;color:#d2d2d2;font-weight:normal;white-space:nowrap;letter-spacing:0.4px;-webkit-text-stroke:0.5px #d2d2d2;">side2_1</div>
<div style="position:absolute;left:929.5px;top:1138px;width:26.5px;height:25.5px;background:#2b2b2b;"></div>
<svg style="position:absolute;left:928px;top:1139px;" width="30" height="25" viewBox="0 0 30 25"><path d="M5.2,13.8 Q4.8,2 14.5,2 Q24.2,2 23.8,13.8 Z" fill="#d4d4d4"/><circle cx="11.2" cy="9" r="2.1" fill="#1a1a1a"/><circle cx="18" cy="9" r="2.1" fill="#1a1a1a"/><rect x="13.4" y="12" width="2.6" height="9.8" rx="1" fill="#d4d4d4"/><rect x="2.2" y="16.2" width="8" height="2.3" fill="#d4d4d4"/><rect x="19" y="16.2" width="8" height="2.3" fill="#d4d4d4"/><rect x="2.2" y="18.5" width="8" height="1" fill="#111"/><rect x="19" y="18.5" width="8" height="1" fill="#111"/></svg>
<div style="position:absolute;left:960px;top:1138px;width:26px;height:25.5px;background:#2b2b2b;"></div>
<svg style="position:absolute;left:961px;top:1139px;" width="23" height="23" viewBox="0 0 23 23"><g stroke="#8c8c8c" stroke-width="1.7"><path d="M11.5,1.5 V21.5 M1.5,11.5 H21.5 M5.5,5.5 L17.5,17.5 M17.5,5.5 L5.5,17.5"/></g><circle cx="11.5" cy="11.5" r="4.2" fill="#8c8c8c"/><circle cx="11.5" cy="11.5" r="2.3" fill="#222"/></svg>
<div style="position:absolute;left:990px;top:1138px;width:26px;height:25.5px;background:#2b2b2b;"></div>
<svg style="position:absolute;left:989px;top:1138px;" width="28" height="25" viewBox="0 0 28 25"><path d="M3,22.5 L25,2.5" stroke="#d0d0d0" stroke-width="2.6" stroke-linecap="round"/></svg>
<div style="position:absolute;left:1079.5px;top:1138px;width:26px;height:25.5px;background:#2b2b2b;"></div>
<div style="position:absolute;left:1110px;top:1138px;width:26px;height:25.5px;background:#2b2b2b;"></div>
<div style="position:absolute;left:0px;top:1169px;width:1150px;height:32px;background:#373737;"></div>
<div style="position:absolute;left:0px;top:1201px;width:1150px;height:2px;background:#282828;"></div>
<div style="position:absolute;left:0px;top:1172px;width:19px;height:24px;background:#2b2b2b;"></div>
<svg style="position:absolute;left:-1px;top:1175px;" width="20" height="19" viewBox="0 0 20 19"><path d="M0,9.3 Q9,-5.3 18.7,9.3 Q9,23.9 0,9.3 Z" fill="#d0d0d0"/><circle cx="8.9" cy="9.2" r="3.8" fill="#1e1e1e"/></svg>
<div style="position:absolute;left:53.5px;top:1171px;width:26.5px;height:26px;background:#2b2b2b;"></div>
<div style="position:absolute;left:83.7px;top:1171px;width:25.5px;height:26px;background:#2b2b2b;"></div>
<svg style="position:absolute;left:131px;top:1178px;" width="12" height="17" viewBox="0 0 12 17"><polyline points="2.5,1.5 9.5,8.2 2.5,15" fill="none" stroke="#c8c8c8" stroke-width="1.7"/></svg>
<div style="position:absolute;left:154.5px;top:1172.8px;width:26px;height:26px;background:#6f87e6;border:1px solid #20253a;box-sizing:border-box;"></div>
<div style="position:absolute;left:197px;top:1174px;font-size:22px;line-height:22px;color:#d0d0d0;font-weight:normal;white-space:nowrap;-webkit-text-stroke:0.5px #d0d0d0;">6</div>
<svg style="position:absolute;left:256px;top:1173px;" width="25" height="24" viewBox="0 0 25 24"><path d="M12.5,1 L15.5,9.2 L24,9.4 L17.3,14.6 L19.8,23 L12.5,18 L5.2,23 L7.7,14.6 L1,9.4 L9.5,9.2 Z" fill="#d0d0d0"/></svg>
<div style="position:absolute;left:295px;top:1175px;font-size:22px;line-height:22px;color:#d2d2d2;font-weight:normal;white-space:nowrap;letter-spacing:0.4px;-webkit-text-stroke:0.5px #d2d2d2;">side1_1</div>
<div style="position:absolute;left:929.5px;top:1172px;width:26.5px;height:25.5px;background:#2b2b2b;"></div>
<svg style="position:absolute;left:928px;top:1173px;" width="30" height="25" viewBox="0 0 30 25"><path d="M5.2,13.8 Q4.8,2 14.5,2 Q24.2,2 23.8,13.8 Z" fill="#d4d4d4"/><circle cx="11.2" cy="9" r="2.1" fill="#1a1a1a"/><circle cx="18" cy="9" r="2.1" fill="#1a1a1a"/><rect x="13.4" y="12" width="2.6" height="9.8" rx="1" fill="#d4d4d4"/><rect x="2.2" y="16.2" width="8" height="2.3" fill="#d4d4d4"/><rect x="19" y="16.2" width="8" height="2.3" fill="#d4d4d4"/><rect x="2.2" y="18.5" width="8" height="1" fill="#111"/><rect x="19" y="18.5" width="8" height="1" fill="#111"/></svg>
<div style="position:absolute;left:960px;top:1172px;width:26px;height:25.5px;background:#2b2b2b;"></div>
<svg style="position:absolute;left:961px;top:1173px;" width="23" height="23" viewBox="0 0 23 23"><g stroke="#8c8c8c" stroke-width="1.7"><path d="M11.5,1.5 V21.5 M1.5,11.5 H21.5 M5.5,5.5 L17.5,17.5 M17.5,5.5 L5.5,17.5"/></g><circle cx="11.5" cy="11.5" r="4.2" fill="#8c8c8c"/><circle cx="11.5" cy="11.5" r="2.3" fill="#222"/></svg>
<div style="position:absolute;left:990px;top:1172px;width:26px;height:25.5px;background:#2b2b2b;"></div>
<svg style="position:absolute;left:989px;top:1172px;" width="28" height="25" viewBox="0 0 28 25"><path d="M3,22.5 L25,2.5" stroke="#d0d0d0" stroke-width="2.6" stroke-linecap="round"/></svg>
<div style="position:absolute;left:1079.5px;top:1172px;width:26px;height:25.5px;background:#2b2b2b;"></div>
<div style="position:absolute;left:1110px;top:1172px;width:26px;height:25.5px;background:#2b2b2b;"></div>
<div style="position:absolute;left:0px;top:1203px;width:1150px;height:32px;background:#373737;"></div>
<div style="position:absolute;left:0px;top:1235px;width:1150px;height:2px;background:#282828;"></div>
<div style="position:absolute;left:0px;top:1206px;width:19px;height:24px;background:#2b2b2b;"></div>
<svg style="position:absolute;left:-1px;top:1209px;" width="20" height="19" viewBox="0 0 20 19"><path d="M0,9.3 Q9,-5.3 18.7,9.3 Q9,23.9 0,9.3 Z" fill="#d0d0d0"/><circle cx="8.9" cy="9.2" r="3.8" fill="#1e1e1e"/></svg>
<div style="position:absolute;left:53.5px;top:1205px;width:26.5px;height:26px;background:#2b2b2b;"></div>
<div style="position:absolute;left:83.7px;top:1205px;width:25.5px;height:26px;background:#2b2b2b;"></div>
<svg style="position:absolute;left:131px;top:1212px;" width="12" height="17" viewBox="0 0 12 17"><polyline points="2.5,1.5 9.5,8.2 2.5,15" fill="none" stroke="#c8c8c8" stroke-width="1.7"/></svg>
<div style="position:absolute;left:154.5px;top:1206.8px;width:26px;height:26px;background:#c83c3c;border:1px solid #20253a;box-sizing:border-box;"></div>
<div style="position:absolute;left:197px;top:1208px;font-size:22px;line-height:22px;color:#d0d0d0;font-weight:normal;white-space:nowrap;-webkit-text-stroke:0.5px #d0d0d0;">7</div>
<div style="position:absolute;left:255px;top:1205px;width:28.5px;height:28.5px;background:#fff;border:2.5px solid #0c0c0c;border-radius:3px;box-sizing:border-box;"></div>
<div style="position:absolute;left:295px;top:1209px;font-size:22px;line-height:22px;color:#d2d2d2;font-weight:normal;white-space:nowrap;letter-spacing:0.4px;-webkit-text-stroke:0.5px #d2d2d2;">Cube Null 1</div>
<div style="position:absolute;left:929.5px;top:1206px;width:26.5px;height:25.5px;background:#2b2b2b;"></div>
<svg style="position:absolute;left:928px;top:1207px;" width="30" height="25" viewBox="0 0 30 25"><path d="M5.2,13.8 Q4.8,2 14.5,2 Q24.2,2 23.8,13.8 Z" fill="#d4d4d4"/><circle cx="11.2" cy="9" r="2.1" fill="#1a1a1a"/><circle cx="18" cy="9" r="2.1" fill="#1a1a1a"/><rect x="13.4" y="12" width="2.6" height="9.8" rx="1" fill="#d4d4d4"/><rect x="2.2" y="16.2" width="8" height="2.3" fill="#d4d4d4"/><rect x="19" y="16.2" width="8" height="2.3" fill="#d4d4d4"/><rect x="2.2" y="18.5" width="8" height="1" fill="#111"/><rect x="19" y="18.5" width="8" height="1" fill="#111"/></svg>
<div style="position:absolute;left:960px;top:1206px;width:26px;height:25.5px;background:#2b2b2b;"></div>
<div style="position:absolute;left:990px;top:1206px;width:26px;height:25.5px;background:#2b2b2b;"></div>
<svg style="position:absolute;left:989px;top:1206px;" width="28" height="25" viewBox="0 0 28 25"><path d="M3,22.5 L25,2.5" stroke="#d0d0d0" stroke-width="2.6" stroke-linecap="round"/></svg>
<div style="position:absolute;left:1079.5px;top:1206px;width:26px;height:25.5px;background:#2b2b2b;"></div>
<div style="position:absolute;left:1110px;top:1206px;width:26px;height:25.5px;background:#2b2b2b;"></div>
<div style="position:absolute;left:1142px;top:1003px;width:10px;height:232px;background:#1c1c1c;"></div>
<div style="position:absolute;left:1139.5px;top:1001.5px;width:2.2px;height:202px;background:#c0c0c0;"></div>
<div style="position:absolute;left:1139.5px;top:1001.5px;width:12px;height:2px;background:#c0c0c0;"></div>
<svg style="position:absolute;left:1139px;top:1203px;" width="14" height="32" viewBox="0 0 14 32"><path d="M1.5,1 V30 H12" fill="none" stroke="#c0c0c0" stroke-width="2" stroke-dasharray="2 2"/><circle cx="10" cy="25" r="3" fill="#bbb"/></svg>
<svg style="position:absolute;left:1143px;top:1007px;" width="10" height="18" viewBox="0 0 10 18"><path d="M1.5,4 L6,1.5 L10,4 V14 L6,16.5 L1.5,14 Z" fill="none" stroke="#cfcfcf" stroke-width="2"/></svg>
<svg style="position:absolute;left:1143px;top:1041px;" width="10" height="18" viewBox="0 0 10 18"><path d="M1.5,4 L6,1.5 L10,4 V14 L6,16.5 L1.5,14 Z" fill="none" stroke="#cfcfcf" stroke-width="2"/></svg>
<svg style="position:absolute;left:1143px;top:1075px;" width="10" height="18" viewBox="0 0 10 18"><path d="M1.5,4 L6,1.5 L10,4 V14 L6,16.5 L1.5,14 Z" fill="none" stroke="#cfcfcf" stroke-width="2"/></svg>
<svg style="position:absolute;left:1143px;top:1109px;" width="10" height="18" viewBox="0 0 10 18"><path d="M1.5,4 L6,1.5 L10,4 V14 L6,16.5 L1.5,14 Z" fill="none" stroke="#cfcfcf" stroke-width="2"/></svg>
<svg style="position:absolute;left:1143px;top:1143px;" width="10" height="18" viewBox="0 0 10 18"><path d="M1.5,4 L6,1.5 L10,4 V14 L6,16.5 L1.5,14 Z" fill="none" stroke="#cfcfcf" stroke-width="2"/></svg>
<svg style="position:absolute;left:1143px;top:1177px;" width="10" height="18" viewBox="0 0 10 18"><path d="M1.5,4 L6,1.5 L10,4 V14 L6,16.5 L1.5,14 Z" fill="none" stroke="#cfcfcf" stroke-width="2"/></svg>
<div style="position:absolute;left:0px;top:1237px;width:1150px;height:13px;background:#2b2b2b;"></div>
</div>
<div class="panel" style="left:1160px;top:0"><div style="position:absolute;left:0;top:1px;width:1150px;height:1250px">
<div style="position:absolute;left:0px;top:-2px;width:1150px;height:773px;background:#000;"></div>
<svg style="position:absolute;left:0px;top:0px;" width="1150" height="771" viewBox="0 0 1150 771"><polygon points="482.5,124.4 704.4,177.4 517.7,249.5 292.4,189.7" fill="#5e1829"/><polygon points="292.4,189.7 517.7,249.5 518.4,534.4 297.3,461.3" fill="#b12d6e"/><polygon points="517.7,249.5 704.4,177.4 698.6,448.7 518.4,534.4" fill="#5a8f47"/><polygon points="499.1,320.4 658.2,365.4 654.8,556.8 499.9,505.2" fill="none" stroke="#d84a44" stroke-width="2" stroke-dasharray="2 1"/><polygon points="499.1,320.4 658.2,365.4 654.8,556.8 499.9,505.2" fill="none" stroke="#f0b8c8" stroke-width="1" stroke-dasharray="1 3" opacity="0.6"/><polyline points="297.3,461.3 292.4,189.7 482.5,124.4" fill="none" stroke="#e02828" stroke-width="1.6"/><line x1="482.5" y1="124.4" x2="704.4" y2="177.4" stroke="#9cc48a" stroke-width="1.8" stroke-dasharray="2.5 1.5"/></svg>
<div style="position:absolute;left:0px;top:771px;width:1150px;height:8px;background:#2f2f2f;"></div>
<div style="position:absolute;left:0px;top:779px;width:1150px;height:3px;background:#232323;"></div>
<div style="position:absolute;left:0px;top:782px;width:1150px;height:43px;background:#282828;"></div>
<div style="position:absolute;left:0px;top:825px;width:1150px;height:6px;background:#1e1e1e;"></div>
<div style="position:absolute;left:0px;top:831px;width:1150px;height:2px;background:#0a1a35;"></div>
<div style="position:absolute;left:0px;top:833px;width:1150px;height:3px;background:#6a90c6;"></div>
<div style="position:absolute;left:0px;top:836px;width:1150px;height:3px;background:#232323;"></div>
<div style="position:absolute;left:0px;top:839px;width:1150px;height:411px;background:#2a2a2a;"></div>
<div style="position:absolute;left:-10px;top:784px;width:144px;height:37px;background:#222;border:2px solid #3a3a3a;border-radius:4px;box-sizing:border-box;"></div>
<div style="position:absolute;left:7px;top:791px;font-size:23px;line-height:23px;color:#d0d0d0;font-weight:normal;white-space:nowrap;letter-spacing:-0.8px;">100%</div>
<svg style="position:absolute;left:107px;top:799px;" width="16" height="9" viewBox="0 0 16 9"><polyline points="1,1 8,8 15,1" fill="none" stroke="#c8c8c8" stroke-width="1.8"/></svg>
<div style="position:absolute;left:142px;top:787px;width:3px;height:30px;background:#363636;"></div>
<div style="position:absolute;left:154px;top:784px;width:172px;height:37px;background:#222;border:2px solid #3a3a3a;border-radius:4px;box-sizing:border-box;"></div>
<div style="position:absolute;left:169px;top:793px;font-size:23px;line-height:23px;color:#d0d0d0;font-weight:normal;white-space:nowrap;">Full</div>
<svg style="position:absolute;left:300px;top:799px;" width="16" height="9" viewBox="0 0 16 9"><polyline points="1,1 8,8 15,1" fill="none" stroke="#c8c8c8" stroke-width="1.8"/></svg>
<div style="position:absolute;left:336px;top:787px;width:3px;height:30px;background:#363636;"></div>
<div style="position:absolute;left:351px;top:783px;width:39px;height:37px;background:#242424;border-radius:4px;"></div>
<svg style="position:absolute;left:354px;top:788px;" width="32" height="28" viewBox="0 0 32 28"><rect x="3" y="3" width="25" height="21" fill="#111"/><path d="M2.3,24.5 V2.3 H29 V17" fill="none" stroke="#dadada" stroke-width="2.4"/><path d="M2.3,20 V25.2 H17" fill="none" stroke="#dadada" stroke-width="2.4"/><path d="M17.5,5.5 L10,13.5 H15 L11.5,20.5 L20,12 H15 L19,5.5 Z" fill="#d0d0d0"/><path d="M19,19.5 H30 L24.5,25.5 Z" fill="#111"/><path d="M20.5,21 H29 L24.75,25 Z" fill="#dadada"/></svg>
<svg style="position:absolute;left:399px;top:791px;" width="29" height="23" viewBox="0 0 29 23"><rect x="2" y="2" width="25" height="19" fill="#111"/><rect x="3.5" y="3.5" width="5.5" height="5.3" fill="#111"/><rect x="3.5" y="8.8" width="5.5" height="5.3" fill="#8a8a8a"/><rect x="3.5" y="14.1" width="5.5" height="5.3" fill="#111"/><rect x="9.0" y="3.5" width="5.5" height="5.3" fill="#8a8a8a"/><rect x="9.0" y="8.8" width="5.5" height="5.3" fill="#111"/><rect x="9.0" y="14.1" width="5.5" height="5.3" fill="#8a8a8a"/><rect x="14.5" y="3.5" width="5.5" height="5.3" fill="#111"/><rect x="14.5" y="8.8" width="5.5" height="5.3" fill="#8a8a8a"/><rect x="14.5" y="14.1" width="5.5" height="5.3" fill="#111"/><rect x="20.0" y="3.5" width="5.5" height="5.3" fill="#8a8a8a"/><rect x="20.0" y="8.8" width="5.5" height="5.3" fill="#111"/><rect x="20.0" y="14.1" width="5.5" height="5.3" fill="#8a8a8a"/><rect x="1.3" y="1.3" width="26.4" height="20.4" rx="2" fill="none" stroke="#dadada" stroke-width="2.4"/></svg>
<div style="position:absolute;left:436px;top:784px;width:42px;height:37px;background:#1a1a1a;border-radius:5px;border:2px solid #2f2f2f;box-sizing:border-box;"></div>
<svg style="position:absolute;left:441px;top:787px;" width="33" height="30" viewBox="0 0 33 30"><path d="M4,14.5 L13.5,5 H28.5 V24 H4 Z" fill="none" stroke="#0a1a3a" stroke-width="3.5"/><path d="M4,14.5 L13.5,5 H28.5 V24 H4 Z" fill="none" stroke="#6aa8f0" stroke-width="1.6"/><g fill="#6aaaf0"><circle cx="4" cy="14.5" r="1.8"/><circle cx="13.5" cy="5" r="1.8"/><circle cx="28.5" cy="5" r="1.8"/><circle cx="28.5" cy="14.5" r="1.8"/><circle cx="28.5" cy="24" r="1.8"/><circle cx="4" cy="24" r="1.8"/></g></svg>
<svg style="position:absolute;left:486px;top:788px;" width="31" height="27" viewBox="0 0 31 27"><rect x="2.5" y="2" width="26" height="23" rx="2" fill="#111" stroke="#dadada" stroke-width="2.4"/><rect x="6.5" y="5.5" width="18" height="16" fill="none" stroke="#2a2a2a" stroke-width="1"/><rect x="9.5" y="9" width="13" height="9.5" fill="#d0d0d0"/></svg>
<svg style="position:absolute;left:527px;top:785px;" width="34" height="34" viewBox="0 0 34 34"><rect x="5" y="4.5" width="25" height="18" fill="#1a1a1a" stroke="#dadada" stroke-width="2.2"/><g fill="#d8d8d8"><path d="M17.5,0.5 L19.5,4.5 L17.5,8.5 L15.5,4.5 Z"/><path d="M17.5,18.5 L19.5,22.5 L17.5,26.5 L15.5,22.5 Z"/><path d="M1.5,13.5 L5,11.5 L8.5,13.5 L5,15.5 Z"/><path d="M26.5,13.5 L30,11.5 L33.5,13.5 L30,15.5 Z"/><path d="M17.5,9.5 L20.5,13.5 L17.5,17.5 L14.5,13.5 Z"/></g><g stroke="#555" stroke-width="1"><path d="M8,7 L13,12 M13,7 L8,12 M22,7 L27,12 M27,7 L22,12 M8,15 L13,20 M13,15 L8,20 M22,15 L27,20 M27,15 L22,20"/></g><path d="M21,27 H32 L26.5,32.5 Z" fill="#d8d8d8"/></svg>
<div style="position:absolute;left:576px;top:787px;width:3px;height:30px;background:#363636;"></div>
<svg style="position:absolute;left:594px;top:785px;" width="32" height="34" viewBox="0 0 32 34"><circle cx="14.5" cy="8" r="6.5" fill="#e81818"/><circle cx="8.5" cy="17.7" r="6.5" fill="#22c822"/><circle cx="20.5" cy="17.7" r="6.5" fill="#5878f0"/><path d="M18,27 H29 L23.5,33 Z" fill="#d8d8d8"/></svg>
<svg style="position:absolute;left:640px;top:787px;" width="28" height="29" viewBox="0 0 28 29"><circle cx="14" cy="14.5" r="12.6" fill="#d2d2d2"/><path d="M14,14.5 m2.6,0.0 q3.7296598096239864,4.699961457764901 10.333099841321168,3.7718758820099647" fill="none" stroke="#262626" stroke-width="1.5"/><path d="M14,14.5 m1.2999944861086188,2.2516692332772124 q-2.2054697786407074,5.579955470745489 1.8999830549481462,10.83466955614752" fill="none" stroke="#262626" stroke-width="1.5"/><path d="M14,14.5 m-1.3000110277593755,2.25165968292369 q-5.935120233864074,0.8799703458510681 -8.433124845065478,7.062747719375183" fill="none" stroke="#262626" stroke-width="1.5"/><path d="M14,14.5 m-2.5999999999298393,-1.9100666536118694e-05 q-3.729625281678519,-4.6999888572489645 -10.333072131294855,-3.771951793098318" fill="none" stroke="#262626" stroke-width="1.5"/><path d="M14,14.5 m-1.2999779443877018,-2.2516787835092122 q2.205510771223016,-5.5799392683092215 -1.8999034589698673,-10.834683513910054" fill="none" stroke="#262626" stroke-width="1.5"/><path d="M14,14.5 m1.3000275693399714,-2.251650132448646 q5.935126698327047,-0.8799267439994558 8.433176730679842,-7.062685765990164" fill="none" stroke="#262626" stroke-width="1.5"/><circle cx="14" cy="14.5" r="3" fill="#262626"/></svg>
<div style="position:absolute;left:680px;top:791px;font-size:23px;line-height:23px;color:#5a9ef0;font-weight:normal;white-space:nowrap;letter-spacing:0.6px;-webkit-text-stroke:0.3px #5a9ef0;transform:scaleX(0.86);transform-origin:0 0;">+0.0</div>
<div style="position:absolute;left:753px;top:787px;width:3px;height:30px;background:#363636;"></div>
<svg style="position:absolute;left:770px;top:789px;" width="32" height="28" viewBox="0 0 32 28"><path d="M1.5,6 H9 L11,2 H20 L22,6 H30 V25.5 H1.5 Z" fill="#d0d0d0"/><circle cx="15.75" cy="15.5" r="5.3" fill="#282828"/><circle cx="15.75" cy="15.5" r="3" fill="#d0d0d0"/></svg>
<svg style="position:absolute;left:812px;top:786px;" width="34" height="29" viewBox="0 0 34 29"><g fill="none" stroke="#4c4c4c" stroke-width="2.4"><path d="M15,7 H18 L20,4 H26 L28,7 H31 V16 H23"/></g><path d="M2,19 Q14,6 26,19 Q14,32 2,19 Z" fill="#4a4a4a"/><circle cx="14" cy="19" r="4.2" fill="#262626"/><circle cx="14" cy="19" r="1.8" fill="#4a4a4a"/></svg>
<div style="position:absolute;left:860px;top:787px;width:3px;height:30px;background:#363636;"></div>
<div style="position:absolute;left:873px;top:784px;width:138px;height:37px;background:#222;border:2px solid #3a3a3a;border-radius:4px;box-sizing:border-box;"></div>
<div style="position:absolute;left:889px;top:791px;font-size:22px;line-height:22px;color:#b4b4b4;font-weight:normal;white-space:nowrap;letter-spacing:-0.1px;">0;00;00;00</div>
<div style="position:absolute;left:1020px;top:787px;width:3px;height:30px;background:#363636;"></div>
<div style="position:absolute;left:1076px;top:784px;width:120px;height:37px;background:#222;border:2px solid #3a3a3a;border-radius:4px;box-sizing:border-box;"></div>
<svg style="position:absolute;left:1089px;top:790px;" width="33" height="32" viewBox="0 0 33 32"><g fill="none" stroke="#d8d8d8" stroke-width="2.2"><path d="M4,9 L14,3 L23,8 V19 L14,24 L4,19 Z"/><path d="M4,9 L14,14 L23,9"/><path d="M14,14 V24"/></g><path d="M26,14 L18,23 H23 L19,31 L29,21 H24 L28,14 Z" fill="#d8d8d8"/></svg>
<div style="position:absolute;left:1131px;top:791px;font-size:22px;line-height:22px;color:#d0d0d0;font-weight:normal;white-space:nowrap;">D</div>
<div style="position:absolute;left:1147px;top:797px;width:2px;height:12px;background:#2a2462;"></div>
<svg style="position:absolute;left:4px;top:856px;" width="13" height="13" viewBox="0 0 13 13"><path d="M1.5,1.5 L11.5,11.5 M11.5,1.5 L1.5,11.5" stroke="#a8a8a8" stroke-width="1.6"/></svg>
<div style="position:absolute;left:35.5px;top:849px;width:20px;height:21px;background:#c6ae87;box-shadow:0 0 0 1px #1a1a1a;"></div>
<div style="position:absolute;left:79px;top:851px;font-size:22px;line-height:22px;color:#cfcfcf;font-weight:normal;white-space:nowrap;letter-spacing:-0.2px;">Comp 1</div>
<svg style="position:absolute;left:176px;top:854px;" width="19" height="17" viewBox="0 0 19 17"><g fill="#d8d8d8"><rect x="1" y="1" width="17" height="2.6"/><rect x="1" y="7.2" width="17" height="2.6"/><rect x="1" y="13.4" width="17" height="2.6"/></g></svg>
<div style="position:absolute;left:15px;top:900px;font-size:25px;line-height:25px;color:#58a2f0;font-weight:normal;white-space:nowrap;-webkit-text-stroke:0.6px #58a2f0;letter-spacing:2.2px;transform:scaleX(1.07);transform-origin:0 0;">0;00;00;00</div>
<div style="position:absolute;left:5px;top:930px;font-size:23px;line-height:23px;color:#3a5f94;font-weight:normal;white-space:nowrap;letter-spacing:-1.0px;">00000 (29.97 fps)</div>
<div style="position:absolute;left:195px;top:903px;width:980px;height:41px;background:#1b1b1b;border:3px solid #383838;border-radius:6px;box-sizing:border-box;"></div>
<svg style="position:absolute;left:206px;top:909px;" width="42" height="30" viewBox="0 0 42 30"><circle cx="17.4" cy="10.6" r="6.8" fill="none" stroke="#cfcfcf" stroke-width="2.2"/><path d="M12.5,15.5 L5,23" stroke="#cfcfcf" stroke-width="2.4" stroke-linecap="round"/><path d="M26.5,16.5 H37.5 L32,22.5 Z" fill="#cfcfcf"/></svg>
<div style="position:absolute;left:0px;top:960px;width:1150px;height:2px;background:#232323;"></div>
<div style="position:absolute;left:0px;top:962px;width:1150px;height:35px;background:#2d2d2d;"></div>
<div style="position:absolute;left:0px;top:997px;width:1150px;height:2px;background:#222;"></div>
<svg style="position:absolute;left:-1px;top:971px;" width="20" height="20" viewBox="0 0 20 20"><path d="M0,9.5 Q9,-5.5 18.7,9.5 Q9,24.5 0,9.5 Z" fill="#d0d0d0"/><circle cx="8.9" cy="9.4" r="3.8" fill="#1e1e1e"/></svg>
<svg style="position:absolute;left:24px;top:968px;" width="27" height="25" viewBox="0 0 27 25"><path d="M1.5,7 H5.5 L11.5,1.5 V23.5 L5.5,18 H1.5 Z" fill="#d0d0d0"/><g fill="none" stroke="#c8c8c8" stroke-width="2.4"><path d="M13.5,8.5 A4.5,4.5 0 0 1 13.5,16.5"/><path d="M14,3.5 A9.2,9.2 0 0 1 14,21.5"/></g></svg>
<svg style="position:absolute;left:58px;top:972px;" width="17" height="17" viewBox="0 0 17 17"><circle cx="8.4" cy="8.5" r="7.2" fill="#cfcfcf"/></svg>
<svg style="position:absolute;left:86px;top:968px;" width="21" height="23" viewBox="0 0 21 23"><path d="M5,10 V7 Q5,1.5 10.5,1.5 Q16,1.5 16,7 V10" fill="none" stroke="#d0d0d0" stroke-width="2.6"/><rect x="1.5" y="10" width="18" height="12" fill="#d0d0d0"/><circle cx="10.5" cy="14.5" r="2" fill="#222"/><rect x="9.5" y="15" width="2" height="4" fill="#222"/></svg>
<div style="position:absolute;left:119px;top:971px;width:2px;height:20px;background:#141414;"></div>
<svg style="position:absolute;left:146px;top:967px;" width="27" height="26" viewBox="0 0 27 26"><path d="M1.8,2.4 L13.2,1.3 L25.7,14.3 L15.3,24.7 L1.8,10.1 Z" fill="#d0d0d0"/><circle cx="7.2" cy="6.2" r="2.1" fill="#111"/></svg>
<div style="position:absolute;left:183px;top:971px;width:2px;height:20px;background:#141414;"></div>
<div style="position:absolute;left:194px;top:971px;font-size:15px;line-height:15px;color:#bfbfbf;font-weight:bold;white-space:nowrap;">#</div>
<div style="position:absolute;left:249px;top:971px;width:2px;height:20px;background:#141414;"></div>
<div style="position:absolute;left:261px;top:970px;font-size:19px;line-height:19px;color:#c4c4c4;font-weight:normal;white-space:nowrap;letter-spacing:-0.75px;">Source Name</div>
<div style="position:absolute;left:919px;top:971px;width:2px;height:20px;background:#141414;"></div>
<svg style="position:absolute;left:928px;top:967px;" width="30" height="25" viewBox="0 0 30 25"><path d="M5.2,13.8 Q4.8,2 14.5,2 Q24.2,2 23.8,13.8 Z" fill="#d4d4d4"/><circle cx="11.2" cy="9" r="2.1" fill="#1a1a1a"/><circle cx="18" cy="9" r="2.1" fill="#1a1a1a"/><rect x="13.4" y="12" width="2.6" height="9.8" rx="1" fill="#d4d4d4"/><rect x="2.2" y="16.2" width="8" height="2.3" fill="#d4d4d4"/><rect x="19" y="16.2" width="8" height="2.3" fill="#d4d4d4"/><rect x="2.2" y="18.5" width="8" height="1" fill="#111"/><rect x="19" y="18.5" width="8" height="1" fill="#111"/></svg>
<svg style="position:absolute;left:961px;top:968px;" width="23" height="23" viewBox="0 0 23 23"><g stroke="#d0d0d0" stroke-width="2"><path d="M11.5,1.5 V21.5 M1.5,11.5 H21.5 M4.4,4.4 L18.6,18.6 M18.6,4.4 L4.4,18.6"/></g><circle cx="11.5" cy="11.5" r="5.5" fill="#d0d0d0"/><circle cx="11.5" cy="11.5" r="2.6" fill="#222"/></svg>
<svg style="position:absolute;left:990px;top:968px;" width="24" height="24" viewBox="0 0 24 24"><g fill="#e8e8e8"><rect x="1.0" y="1.0" width="3.4" height="3.4"/><rect x="4.6" y="4.6" width="3.4" height="3.4"/><rect x="8.2" y="8.2" width="3.4" height="3.4"/><rect x="11.8" y="11.8" width="3.4" height="3.4"/><rect x="15.4" y="15.4" width="3.4" height="3.4"/><rect x="19.0" y="19.0" width="3.4" height="3.4"/></g></svg>
<div style="position:absolute;left:1019px;top:962px;font-size:32px;line-height:32px;color:#c8c8c8;font-weight:normal;white-space:nowrap;font-style:italic;font-family:"Liberation Serif",serif;letter-spacing:-1px;">fx</div>
<svg style="position:absolute;left:1048px;top:967px;" width="27" height="27" viewBox="0 0 27 27"><path d="M2,5 V25 H25" fill="none" stroke="#cfcfcf" stroke-width="2.2"/><rect x="6" y="1.5" width="19" height="19" fill="#cfcfcf"/><g fill="#333"><rect x="8.5" y="4" width="2" height="2"/><rect x="8.5" y="8.5" width="2" height="2"/><rect x="8.5" y="13" width="2" height="2"/><rect x="8.5" y="17" width="2" height="2"/><rect x="21" y="4" width="2" height="2"/><rect x="21" y="8.5" width="2" height="2"/><rect x="21" y="13" width="2" height="2"/><rect x="21" y="17" width="2" height="2"/><rect x="12" y="10" width="7" height="2.2"/></g></svg>
<svg style="position:absolute;left:1078px;top:966px;" width="30" height="29" viewBox="0 0 30 29"><g fill="none" stroke="#c0c0c0" stroke-width="2"><circle cx="9" cy="20" r="7"/><circle cx="12" cy="17" r="7"/></g><circle cx="18" cy="11" r="9.5" fill="#7a7a7a" stroke="#bdbdbd" stroke-width="1.6"/></svg>
<svg style="position:absolute;left:1111px;top:970px;" width="23" height="23" viewBox="0 0 23 23"><circle cx="11.5" cy="11.5" r="9.8" fill="#cfcfcf"/><path d="M18.4,4.6 A9.8,9.8 0 0 0 4.6,18.4 Z" fill="#1e1e1e"/><circle cx="11.5" cy="11.5" r="9.8" fill="none" stroke="#cfcfcf" stroke-width="2"/></svg>
<svg style="position:absolute;left:1141px;top:970px;" width="12" height="24" viewBox="0 0 12 24"><path d="M2,7 L8,3 L14,7 V17 L8,21 L2,17 Z" fill="none" stroke="#cfcfcf" stroke-width="2"/></svg>
<div style="position:absolute;left:0px;top:999px;width:1150px;height:32px;background:#373737;"></div>
<div style="position:absolute;left:0px;top:1031px;width:1150px;height:2px;background:#282828;"></div>
<div style="position:absolute;left:0px;top:1002px;width:19px;height:24px;background:#2b2b2b;"></div>
<svg style="position:absolute;left:-1px;top:1005px;" width="20" height="19" viewBox="0 0 20 19"><path d="M0,9.3 Q9,-5.3 18.7,9.3 Q9,23.9 0,9.3 Z" fill="#d0d0d0"/><circle cx="8.9" cy="9.2" r="3.8" fill="#1e1e1e"/></svg>
<div style="position:absolute;left:53.5px;top:1001px;width:26.5px;height:26px;background:#2b2b2b;"></div>
<div style="position:absolute;left:83.7px;top:1001px;width:25.5px;height:26px;background:#2b2b2b;"></div>
<svg style="position:absolute;left:131px;top:1008px;" width="12" height="17" viewBox="0 0 12 17"><polyline points="2.5,1.5 9.5,8.2 2.5,15" fill="none" stroke="#c8c8c8" stroke-width="1.7"/></svg>
<div style="position:absolute;left:154.5px;top:1002.8px;width:26px;height:26px;background:#cc3c3c;border:1px solid #20253a;box-sizing:border-box;"></div>
<div style="position:absolute;left:197px;top:1004px;font-size:22px;line-height:22px;color:#d0d0d0;font-weight:normal;white-space:nowrap;-webkit-text-stroke:0.5px #d0d0d0;">1</div>
<div style="position:absolute;left:255px;top:1001px;width:28.5px;height:28.5px;background:#999;border:2.5px solid #0c0c0c;border-radius:3px;box-sizing:border-box;"></div>
<div style="position:absolute;left:295px;top:1005px;font-size:22px;line-height:22px;color:#d2d2d2;font-weight:normal;white-space:nowrap;letter-spacing:0.4px;-webkit-text-stroke:0.5px #d2d2d2;">side6</div>
<div style="position:absolute;left:929.5px;top:1002px;width:26.5px;height:25.5px;background:#2b2b2b;"></div>
<svg style="position:absolute;left:928px;top:1003px;" width="30" height="25" viewBox="0 0 30 25"><path d="M5.2,13.8 Q4.8,2 14.5,2 Q24.2,2 23.8,13.8 Z" fill="#d4d4d4"/><circle cx="11.2" cy="9" r="2.1" fill="#1a1a1a"/><circle cx="18" cy="9" r="2.1" fill="#1a1a1a"/><rect x="13.4" y="12" width="2.6" height="9.8" rx="1" fill="#d4d4d4"/><rect x="2.2" y="16.2" width="8" height="2.3" fill="#d4d4d4"/><rect x="19" y="16.2" width="8" height="2.3" fill="#d4d4d4"/><rect x="2.2" y="18.5" width="8" height="1" fill="#111"/><rect x="19" y="18.5" width="8" height="1" fill="#111"/></svg>
<div style="position:absolute;left:960px;top:1002px;width:26px;height:25.5px;background:#2b2b2b;"></div>
<div style="position:absolute;left:990px;top:1002px;width:26px;height:25.5px;background:#2b2b2b;"></div>
<svg style="position:absolute;left:989px;top:1002px;" width="28" height="25" viewBox="0 0 28 25"><path d="M3,22.5 L25,2.5" stroke="#d0d0d0" stroke-width="2.6" stroke-linecap="round"/></svg>
<div style="position:absolute;left:1020px;top:1002px;width:26px;height:25.5px;background:#2b2b2b;"></div>
<div style="position:absolute;left:1020px;top:1000px;font-size:30px;line-height:30px;color:#d0d0d0;font-weight:normal;white-space:nowrap;font-style:italic;font-family:"Liberation Serif",serif;letter-spacing:-1px;">fx</div>
<div style="position:absolute;left:1079.5px;top:1002px;width:26px;height:25.5px;background:#2b2b2b;"></div>
<div style="position:absolute;left:1110px;top:1002px;width:26px;height:25.5px;background:#2b2b2b;"></div>
<div style="position:absolute;left:0px;top:1033px;width:1150px;height:32px;background:#373737;"></div>
<div style="position:absolute;left:0px;top:1065px;width:1150px;height:2px;background:#282828;"></div>
<div style="position:absolute;left:0px;top:1036px;width:19px;height:24px;background:#2b2b2b;"></div>
<svg style="position:absolute;left:-1px;top:1039px;" width="20" height="19" viewBox="0 0 20 19"><path d="M0,9.3 Q9,-5.3 18.7,9.3 Q9,23.9 0,9.3 Z" fill="#d0d0d0"/><circle cx="8.9" cy="9.2" r="3.8" fill="#1e1e1e"/></svg>
<div style="position:absolute;left:53.5px;top:1035px;width:26.5px;height:26px;background:#2b2b2b;"></div>
<div style="position:absolute;left:83.7px;top:1035px;width:25.5px;height:26px;background:#2b2b2b;"></div>
<svg style="position:absolute;left:131px;top:1042px;" width="12" height="17" viewBox="0 0 12 17"><polyline points="2.5,1.5 9.5,8.2 2.5,15" fill="none" stroke="#c8c8c8" stroke-width="1.7"/></svg>
<div style="position:absolute;left:154.5px;top:1036.8px;width:26px;height:26px;background:#cc3c3c;border:1px solid #20253a;box-sizing:border-box;"></div>
<div style="position:absolute;left:197px;top:1038px;font-size:22px;line-height:22px;color:#d0d0d0;font-weight:normal;white-space:nowrap;-webkit-text-stroke:0.5px #d0d0d0;">2</div>
<div style="position:absolute;left:255px;top:1035px;width:28.5px;height:28.5px;background:#999;border:2.5px solid #0c0c0c;border-radius:3px;box-sizing:border-box;"></div>
<div style="position:absolute;left:295px;top:1039px;font-size:22px;line-height:22px;color:#d2d2d2;font-weight:normal;white-space:nowrap;letter-spacing:0.4px;-webkit-text-stroke:0.5px #d2d2d2;">side5</div>
<div style="position:absolute;left:929.5px;top:1036px;width:26.5px;height:25.5px;background:#2b2b2b;"></div>
<svg style="position:absolute;left:928px;top:1037px;" width="30" height="25" viewBox="0 0 30 25"><path d="M5.2,13.8 Q4.8,2 14.5,2 Q24.2,2 23.8,13.8 Z" fill="#d4d4d4"/><circle cx="11.2" cy="9" r="2.1" fill="#1a1a1a"/><circle cx="18" cy="9" r="2.1" fill="#1a1a1a"/><rect x="13.4" y="12" width="2.6" height="9.8" rx="1" fill="#d4d4d4"/><rect x="2.2" y="16.2" width="8" height="2.3" fill="#d4d4d4"/><rect x="19" y="16.2" width="8" height="2.3" fill="#d4d4d4"/><rect x="2.2" y="18.5" width="8" height="1" fill="#111"/><rect x="19" y="18.5" width="8" height="1" fill="#111"/></svg>
<div style="position:absolute;left:960px;top:1036px;width:26px;height:25.5px;background:#2b2b2b;"></div>
<div style="position:absolute;left:990px;top:1036px;width:26px;height:25.5px;background:#2b2b2b;"></div>
<svg style="position:absolute;left:989px;top:1036px;" width="28" height="25" viewBox="0 0 28 25"><path d="M3,22.5 L25,2.5" stroke="#d0d0d0" stroke-width="2.6" stroke-linecap="round"/></svg>
<div style="position:absolute;left:1020px;top:1036px;width:26px;height:25.5px;background:#2b2b2b;"></div>
<div style="position:absolute;left:1020px;top:1034px;font-size:30px;line-height:30px;color:#d0d0d0;font-weight:normal;white-space:nowrap;font-style:italic;font-family:"Liberation Serif",serif;letter-spacing:-1px;">fx</div>
<div style="position:absolute;left:1079.5px;top:1036px;width:26px;height:25.5px;background:#2b2b2b;"></div>
<div style="position:absolute;left:1110px;top:1036px;width:26px;height:25.5px;background:#2b2b2b;"></div>
<div style="position:absolute;left:0px;top:1067px;width:1150px;height:32px;background:#373737;"></div>
<div style="position:absolute;left:0px;top:1099px;width:1150px;height:2px;background:#282828;"></div>
<div style="position:absolute;left:0px;top:1070px;width:19px;height:24px;background:#2b2b2b;"></div>
<svg style="position:absolute;left:-1px;top:1073px;" width="20" height="19" viewBox="0 0 20 19"><path d="M0,9.3 Q9,-5.3 18.7,9.3 Q9,23.9 0,9.3 Z" fill="#d0d0d0"/><circle cx="8.9" cy="9.2" r="3.8" fill="#1e1e1e"/></svg>
<div style="position:absolute;left:53.5px;top:1069px;width:26.5px;height:26px;background:#2b2b2b;"></div>
<div style="position:absolute;left:83.7px;top:1069px;width:25.5px;height:26px;background:#2b2b2b;"></div>
<svg style="position:absolute;left:131px;top:1076px;" width="12" height="17" viewBox="0 0 12 17"><polyline points="2.5,1.5 9.5,8.2 2.5,15" fill="none" stroke="#c8c8c8" stroke-width="1.7"/></svg>
<div style="position:absolute;left:154.5px;top:1070.8px;width:26px;height:26px;background:#cc3c3c;border:1px solid #20253a;box-sizing:border-box;"></div>
<div style="position:absolute;left:197px;top:1072px;font-size:22px;line-height:22px;color:#d0d0d0;font-weight:normal;white-space:nowrap;-webkit-text-stroke:0.5px #d0d0d0;">3</div>
<div style="position:absolute;left:255px;top:1069px;width:28.5px;height:28.5px;background:#999;border:2.5px solid #0c0c0c;border-radius:3px;box-sizing:border-box;"></div>
<div style="position:absolute;left:295px;top:1073px;font-size:22px;line-height:22px;color:#d2d2d2;font-weight:normal;white-space:nowrap;letter-spacing:0.4px;-webkit-text-stroke:0.5px #d2d2d2;">side4</div>
<div style="position:absolute;left:929.5px;top:1070px;width:26.5px;height:25.5px;background:#2b2b2b;"></div>
<svg style="position:absolute;left:928px;top:1071px;" width="30" height="25" viewBox="0 0 30 25"><path d="M5.2,13.8 Q4.8,2 14.5,2 Q24.2,2 23.8,13.8 Z" fill="#d4d4d4"/><circle cx="11.2" cy="9" r="2.1" fill="#1a1a1a"/><circle cx="18" cy="9" r="2.1" fill="#1a1a1a"/><rect x="13.4" y="12" width="2.6" height="9.8" rx="1" fill="#d4d4d4"/><rect x="2.2" y="16.2" width="8" height="2.3" fill="#d4d4d4"/><rect x="19" y="16.2" width="8" height="2.3" fill="#d4d4d4"/><rect x="2.2" y="18.5" width="8" height="1" fill="#111"/><rect x="19" y="18.5" width="8" height="1" fill="#111"/></svg>
<div style="position:absolute;left:960px;top:1070px;width:26px;height:25.5px;background:#2b2b2b;"></div>
<div style="position:absolute;left:990px;top:1070px;width:26px;height:25.5px;background:#2b2b2b;"></div>
<svg style="position:absolute;left:989px;top:1070px;" width="28" height="25" viewBox="0 0 28 25"><path d="M3,22.5 L25,2.5" stroke="#d0d0d0" stroke-width="2.6" stroke-linecap="round"/></svg>
<div style="position:absolute;left:1020px;top:1070px;width:26px;height:25.5px;background:#2b2b2b;"></div>
<div style="position:absolute;left:1020px;top:1068px;font-size:30px;line-height:30px;color:#d0d0d0;font-weight:normal;white-space:nowrap;font-style:italic;font-family:"Liberation Serif",serif;letter-spacing:-1px;">fx</div>
<div style="position:absolute;left:1079.5px;top:1070px;width:26px;height:25.5px;background:#2b2b2b;"></div>
<div style="position:absolute;left:1110px;top:1070px;width:26px;height:25.5px;background:#2b2b2b;"></div>
<div style="position:absolute;left:0px;top:1101px;width:1150px;height:32px;background:#373737;"></div>
<div style="position:absolute;left:0px;top:1133px;width:1150px;height:2px;background:#282828;"></div>
<div style="position:absolute;left:0px;top:1104px;width:19px;height:24px;background:#2b2b2b;"></div>
<svg style="position:absolute;left:-1px;top:1107px;" width="20" height="19" viewBox="0 0 20 19"><path d="M0,9.3 Q9,-5.3 18.7,9.3 Q9,23.9 0,9.3 Z" fill="#d0d0d0"/><circle cx="8.9" cy="9.2" r="3.8" fill="#1e1e1e"/></svg>
<div style="position:absolute;left:53.5px;top:1103px;width:26.5px;height:26px;background:#2b2b2b;"></div>
<div style="position:absolute;left:83.7px;top:1103px;width:25.5px;height:26px;background:#2b2b2b;"></div>
<svg style="position:absolute;left:131px;top:1110px;" width="12" height="17" viewBox="0 0 12 17"><polyline points="2.5,1.5 9.5,8.2 2.5,15" fill="none" stroke="#c8c8c8" stroke-width="1.7"/></svg>
<div style="position:absolute;left:154.5px;top:1104.8px;width:26px;height:26px;background:#cc3c3c;border:1px solid #20253a;box-sizing:border-box;"></div>
<div style="position:absolute;left:197px;top:1106px;font-size:22px;line-height:22px;color:#d0d0d0;font-weight:normal;white-space:nowrap;-webkit-text-stroke:0.5px #d0d0d0;">4</div>
<div style="position:absolute;left:255px;top:1103px;width:28.5px;height:28.5px;background:#999;border:2.5px solid #0c0c0c;border-radius:3px;box-sizing:border-box;"></div>
<div style="position:absolute;left:295px;top:1107px;font-size:22px;line-height:22px;color:#d2d2d2;font-weight:normal;white-space:nowrap;letter-spacing:0.4px;-webkit-text-stroke:0.5px #d2d2d2;">side3</div>
<div style="position:absolute;left:929.5px;top:1104px;width:26.5px;height:25.5px;background:#2b2b2b;"></div>
<svg style="position:absolute;left:928px;top:1105px;" width="30" height="25" viewBox="0 0 30 25"><path d="M5.2,13.8 Q4.8,2 14.5,2 Q24.2,2 23.8,13.8 Z" fill="#d4d4d4"/><circle cx="11.2" cy="9" r="2.1" fill="#1a1a1a"/><circle cx="18" cy="9" r="2.1" fill="#1a1a1a"/><rect x="13.4" y="12" width="2.6" height="9.8" rx="1" fill="#d4d4d4"/><rect x="2.2" y="16.2" width="8" height="2.3" fill="#d4d4d4"/><rect x="19" y="16.2" width="8" height="2.3" fill="#d4d4d4"/><rect x="2.2" y="18.5" width="8" height="1" fill="#111"/><rect x="19" y="18.5" width="8" height="1" fill="#111"/></svg>
<div style="position:absolute;left:960px;top:1104px;width:26px;height:25.5px;background:#2b2b2b;"></div>
<div style="position:absolute;left:990px;top:1104px;width:26px;height:25.5px;background:#2b2b2b;"></div>
<svg style="position:absolute;left:989px;top:1104px;" width="28" height="25" viewBox="0 0 28 25"><path d="M3,22.5 L25,2.5" stroke="#d0d0d0" stroke-width="2.6" stroke-linecap="round"/></svg>
<div style="position:absolute;left:1020px;top:1104px;width:26px;height:25.5px;background:#2b2b2b;"></div>
<div style="position:absolute;left:1020px;top:1102px;font-size:30px;line-height:30px;color:#d0d0d0;font-weight:normal;white-space:nowrap;font-style:italic;font-family:"Liberation Serif",serif;letter-spacing:-1px;">fx</div>
<div style="position:absolute;left:1079.5px;top:1104px;width:26px;height:25.5px;background:#2b2b2b;"></div>
<div style="position:absolute;left:1110px;top:1104px;width:26px;height:25.5px;background:#2b2b2b;"></div>
<div style="position:absolute;left:0px;top:1135px;width:1150px;height:32px;background:#373737;"></div>
<div style="position:absolute;left:0px;top:1167px;width:1150px;height:2px;background:#282828;"></div>
<div style="position:absolute;left:0px;top:1138px;width:19px;height:24px;background:#2b2b2b;"></div>
<svg style="position:absolute;left:-1px;top:1141px;" width="20" height="19" viewBox="0 0 20 19"><path d="M0,9.3 Q9,-5.3 18.7,9.3 Q9,23.9 0,9.3 Z" fill="#d0d0d0"/><circle cx="8.9" cy="9.2" r="3.8" fill="#1e1e1e"/></svg>
<div style="position:absolute;left:53.5px;top:1137px;width:26.5px;height:26px;background:#2b2b2b;"></div>
<div style="position:absolute;left:83.7px;top:1137px;width:25.5px;height:26px;background:#2b2b2b;"></div>
<svg style="position:absolute;left:131px;top:1144px;" width="12" height="17" viewBox="0 0 12 17"><polyline points="2.5,1.5 9.5,8.2 2.5,15" fill="none" stroke="#c8c8c8" stroke-width="1.7"/></svg>
<div style="position:absolute;left:154.5px;top:1138.8px;width:26px;height:26px;background:#cc3c3c;border:1px solid #20253a;box-sizing:border-box;"></div>
<div style="position:absolute;left:197px;top:1140px;font-size:22px;line-height:22px;color:#d0d0d0;font-weight:normal;white-space:nowrap;-webkit-text-stroke:0.5px #d0d0d0;">5</div>
<div style="position:absolute;left:255px;top:1137px;width:28.5px;height:28.5px;background:#999;border:2.5px solid #0c0c0c;border-radius:3px;box-sizing:border-box;"></div>
<div style="position:absolute;left:295px;top:1141px;font-size:22px;line-height:22px;color:#d2d2d2;font-weight:normal;white-space:nowrap;letter-spacing:0.4px;-webkit-text-stroke:0.5px #d2d2d2;">side2</div>
<div style="position:absolute;left:929.5px;top:1138px;width:26.5px;height:25.5px;background:#2b2b2b;"></div>
<svg style="position:absolute;left:928px;top:1139px;" width="30" height="25" viewBox="0 0 30 25"><path d="M5.2,13.8 Q4.8,2 14.5,2 Q24.2,2 23.8,13.8 Z" fill="#d4d4d4"/><circle cx="11.2" cy="9" r="2.1" fill="#1a1a1a"/><circle cx="18" cy="9" r="2.1" fill="#1a1a1a"/><rect x="13.4" y="12" width="2.6" height="9.8" rx="1" fill="#d4d4d4"/><rect x="2.2" y="16.2" width="8" height="2.3" fill="#d4d4d4"/><rect x="19" y="16.2" width="8" height="2.3" fill="#d4d4d4"/><rect x="2.2" y="18.5" width="8" height="1" fill="#111"/><rect x="19" y="18.5" width="8" height="1" fill="#111"/></svg>
<div style="position:absolute;left:960px;top:1138px;width:26px;height:25.5px;background:#2b2b2b;"></div>
<div style="position:absolute;left:990px;top:1138px;width:26px;height:25.5px;background:#2b2b2b;"></div>
<svg style="position:absolute;left:989px;top:1138px;" width="28" height="25" viewBox="0 0 28 25"><path d="M3,22.5 L25,2.5" stroke="#d0d0d0" stroke-width="2.6" stroke-linecap="round"/></svg>
<div style="position:absolute;left:1020px;top:1138px;width:26px;height:25.5px;background:#2b2b2b;"></div>
<div style="position:absolute;left:1020px;top:1136px;font-size:30px;line-height:30px;color:#d0d0d0;font-weight:normal;white-space:nowrap;font-style:italic;font-family:"Liberation Serif",serif;letter-spacing:-1px;">fx</div>
<div style="position:absolute;left:1079.5px;top:1138px;width:26px;height:25.5px;background:#2b2b2b;"></div>
<div style="position:absolute;left:1110px;top:1138px;width:26px;height:25.5px;background:#2b2b2b;"></div>
<div style="position:absolute;left:0px;top:1169px;width:1150px;height:32px;background:#373737;"></div>
<div style="position:absolute;left:0px;top:1201px;width:1150px;height:2px;background:#282828;"></div>
<div style="position:absolute;left:0px;top:1172px;width:19px;height:24px;background:#2b2b2b;"></div>
<svg style="position:absolute;left:-1px;top:1175px;" width="20" height="19" viewBox="0 0 20 19"><path d="M0,9.3 Q9,-5.3 18.7,9.3 Q9,23.9 0,9.3 Z" fill="#d0d0d0"/><circle cx="8.9" cy="9.2" r="3.8" fill="#1e1e1e"/></svg>
<div style="position:absolute;left:53.5px;top:1171px;width:26.5px;height:26px;background:#2b2b2b;"></div>
<div style="position:absolute;left:83.7px;top:1171px;width:25.5px;height:26px;background:#2b2b2b;"></div>
<svg style="position:absolute;left:131px;top:1178px;" width="12" height="17" viewBox="0 0 12 17"><polyline points="2.5,1.5 9.5,8.2 2.5,15" fill="none" stroke="#c8c8c8" stroke-width="1.7"/></svg>
<div style="position:absolute;left:154.5px;top:1172.8px;width:26px;height:26px;background:#cc3c3c;border:1px solid #20253a;box-sizing:border-box;"></div>
<div style="position:absolute;left:197px;top:1174px;font-size:22px;line-height:22px;color:#d0d0d0;font-weight:normal;white-space:nowrap;-webkit-text-stroke:0.5px #d0d0d0;">6</div>
<div style="position:absolute;left:255px;top:1171px;width:28.5px;height:28.5px;background:#999;border:2.5px solid #0c0c0c;border-radius:3px;box-sizing:border-box;"></div>
<div style="position:absolute;left:295px;top:1175px;font-size:22px;line-height:22px;color:#d2d2d2;font-weight:normal;white-space:nowrap;letter-spacing:0.4px;-webkit-text-stroke:0.5px #d2d2d2;">side1</div>
<div style="position:absolute;left:929.5px;top:1172px;width:26.5px;height:25.5px;background:#2b2b2b;"></div>
<svg style="position:absolute;left:928px;top:1173px;" width="30" height="25" viewBox="0 0 30 25"><path d="M5.2,13.8 Q4.8,2 14.5,2 Q24.2,2 23.8,13.8 Z" fill="#d4d4d4"/><circle cx="11.2" cy="9" r="2.1" fill="#1a1a1a"/><circle cx="18" cy="9" r="2.1" fill="#1a1a1a"/><rect x="13.4" y="12" width="2.6" height="9.8" rx="1" fill="#d4d4d4"/><rect x="2.2" y="16.2" width="8" height="2.3" fill="#d4d4d4"/><rect x="19" y="16.2" width="8" height="2.3" fill="#d4d4d4"/><rect x="2.2" y="18.5" width="8" height="1" fill="#111"/><rect x="19" y="18.5" width="8" height="1" fill="#111"/></svg>
<div style="position:absolute;left:960px;top:1172px;width:26px;height:25.5px;background:#2b2b2b;"></div>
<div style="position:absolute;left:990px;top:1172px;width:26px;height:25.5px;background:#2b2b2b;"></div>
<svg style="position:absolute;left:989px;top:1172px;" width="28" height="25" viewBox="0 0 28 25"><path d="M3,22.5 L25,2.5" stroke="#d0d0d0" stroke-width="2.6" stroke-linecap="round"/></svg>
<div style="position:absolute;left:1020px;top:1172px;width:26px;height:25.5px;background:#2b2b2b;"></div>
<div style="position:absolute;left:1020px;top:1170px;font-size:30px;line-height:30px;color:#d0d0d0;font-weight:normal;white-space:nowrap;font-style:italic;font-family:"Liberation Serif",serif;letter-spacing:-1px;">fx</div>
<div style="position:absolute;left:1079.5px;top:1172px;width:26px;height:25.5px;background:#2b2b2b;"></div>
<div style="position:absolute;left:1110px;top:1172px;width:26px;height:25.5px;background:#2b2b2b;"></div>
<div style="position:absolute;left:0px;top:1203px;width:1150px;height:32px;background:#373737;"></div>
<div style="position:absolute;left:0px;top:1235px;width:1150px;height:2px;background:#282828;"></div>
<div style="position:absolute;left:0px;top:1206px;width:19px;height:24px;background:#2b2b2b;"></div>
<svg style="position:absolute;left:-1px;top:1209px;" width="20" height="19" viewBox="0 0 20 19"><path d="M0,9.3 Q9,-5.3 18.7,9.3 Q9,23.9 0,9.3 Z" fill="#d0d0d0"/><circle cx="8.9" cy="9.2" r="3.8" fill="#1e1e1e"/></svg>
<div style="position:absolute;left:53.5px;top:1205px;width:26.5px;height:26px;background:#2b2b2b;"></div>
<div style="position:absolute;left:83.7px;top:1205px;width:25.5px;height:26px;background:#2b2b2b;"></div>
<svg style="position:absolute;left:131px;top:1212px;" width="12" height="17" viewBox="0 0 12 17"><polyline points="2.5,1.5 9.5,8.2 2.5,15" fill="none" stroke="#c8c8c8" stroke-width="1.7"/></svg>
<div style="position:absolute;left:154.5px;top:1206.8px;width:26px;height:26px;background:#cc3c3c;border:1px solid #20253a;box-sizing:border-box;"></div>
<div style="position:absolute;left:197px;top:1208px;font-size:22px;line-height:22px;color:#d0d0d0;font-weight:normal;white-space:nowrap;-webkit-text-stroke:0.5px #d0d0d0;">7</div>
<div style="position:absolute;left:255px;top:1205px;width:28.5px;height:28.5px;background:#fff;border:2.5px solid #0c0c0c;border-radius:3px;box-sizing:border-box;"></div>
<div style="position:absolute;left:295px;top:1209px;font-size:22px;line-height:22px;color:#d2d2d2;font-weight:normal;white-space:nowrap;letter-spacing:0.4px;-webkit-text-stroke:0.5px #d2d2d2;">Cube Null 1</div>
<div style="position:absolute;left:929.5px;top:1206px;width:26.5px;height:25.5px;background:#2b2b2b;"></div>
<svg style="position:absolute;left:928px;top:1207px;" width="30" height="25" viewBox="0 0 30 25"><path d="M5.2,13.8 Q4.8,2 14.5,2 Q24.2,2 23.8,13.8 Z" fill="#d4d4d4"/><circle cx="11.2" cy="9" r="2.1" fill="#1a1a1a"/><circle cx="18" cy="9" r="2.1" fill="#1a1a1a"/><rect x="13.4" y="12" width="2.6" height="9.8" rx="1" fill="#d4d4d4"/><rect x="2.2" y="16.2" width="8" height="2.3" fill="#d4d4d4"/><rect x="19" y="16.2" width="8" height="2.3" fill="#d4d4d4"/><rect x="2.2" y="18.5" width="8" height="1" fill="#111"/><rect x="19" y="18.5" width="8" height="1" fill="#111"/></svg>
<div style="position:absolute;left:960px;top:1206px;width:26px;height:25.5px;background:#2b2b2b;"></div>
<div style="position:absolute;left:990px;top:1206px;width:26px;height:25.5px;background:#2b2b2b;"></div>
<svg style="position:absolute;left:989px;top:1206px;" width="28" height="25" viewBox="0 0 28 25"><path d="M3,22.5 L25,2.5" stroke="#d0d0d0" stroke-width="2.6" stroke-linecap="round"/></svg>
<div style="position:absolute;left:1079.5px;top:1206px;width:26px;height:25.5px;background:#2b2b2b;"></div>
<div style="position:absolute;left:1110px;top:1206px;width:26px;height:25.5px;background:#2b2b2b;"></div>
<div style="position:absolute;left:1142px;top:1003px;width:10px;height:232px;background:#1c1c1c;"></div>
<div style="position:absolute;left:1139.5px;top:1001.5px;width:2.2px;height:202px;background:#c0c0c0;"></div>
<div style="position:absolute;left:1139.5px;top:1001.5px;width:12px;height:2px;background:#c0c0c0;"></div>
<svg style="position:absolute;left:1139px;top:1203px;" width="14" height="32" viewBox="0 0 14 32"><path d="M1.5,1 V30 H12" fill="none" stroke="#c0c0c0" stroke-width="2" stroke-dasharray="2 2"/><circle cx="10" cy="25" r="3" fill="#bbb"/></svg>
<svg style="position:absolute;left:1143px;top:1007px;" width="10" height="18" viewBox="0 0 10 18"><path d="M1.5,4 L6,1.5 L10,4 V14 L6,16.5 L1.5,14 Z" fill="none" stroke="#cfcfcf" stroke-width="2"/></svg>
<svg style="position:absolute;left:1143px;top:1041px;" width="10" height="18" viewBox="0 0 10 18"><path d="M1.5,4 L6,1.5 L10,4 V14 L6,16.5 L1.5,14 Z" fill="none" stroke="#cfcfcf" stroke-width="2"/></svg>
<svg style="position:absolute;left:1143px;top:1075px;" width="10" height="18" viewBox="0 0 10 18"><path d="M1.5,4 L6,1.5 L10,4 V14 L6,16.5 L1.5,14 Z" fill="none" stroke="#cfcfcf" stroke-width="2"/></svg>
<svg style="position:absolute;left:1143px;top:1109px;" width="10" height="18" viewBox="0 0 10 18"><path d="M1.5,4 L6,1.5 L10,4 V14 L6,16.5 L1.5,14 Z" fill="none" stroke="#cfcfcf" stroke-width="2"/></svg>
<svg style="position:absolute;left:1143px;top:1143px;" width="10" height="18" viewBox="0 0 10 18"><path d="M1.5,4 L6,1.5 L10,4 V14 L6,16.5 L1.5,14 Z" fill="none" stroke="#cfcfcf" stroke-width="2"/></svg>
<svg style="position:absolute;left:1143px;top:1177px;" width="10" height="18" viewBox="0 0 10 18"><path d="M1.5,4 L6,1.5 L10,4 V14 L6,16.5 L1.5,14 Z" fill="none" stroke="#cfcfcf" stroke-width="2"/></svg>
<div style="position:absolute;left:0px;top:1237px;width:1150px;height:13px;background:#2b2b2b;"></div>
</div></div>
</body></html>
